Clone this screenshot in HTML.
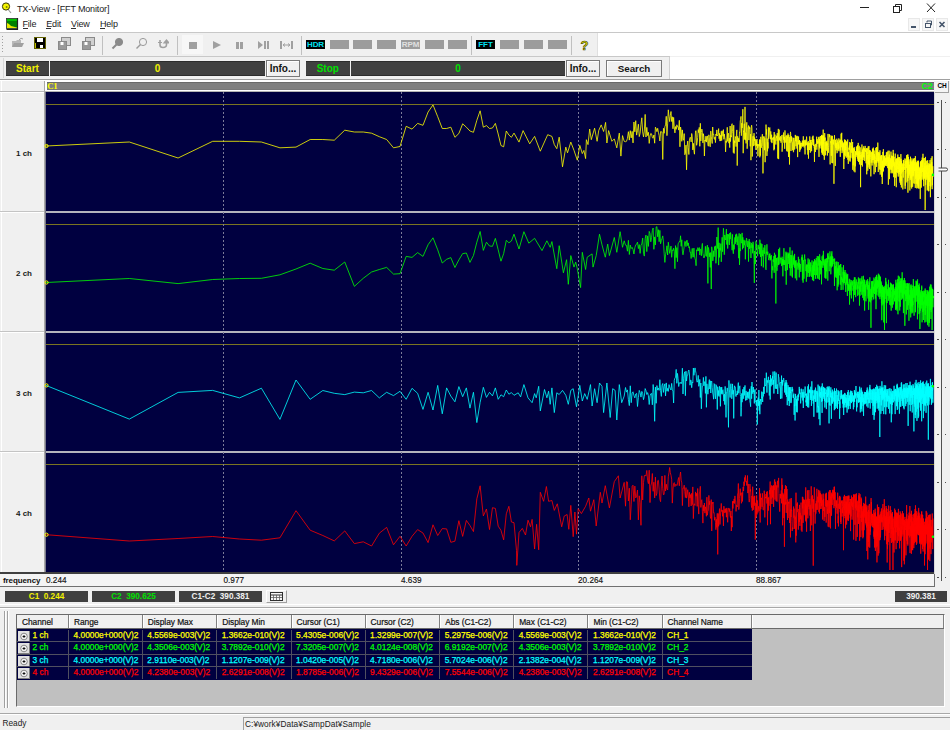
<!DOCTYPE html><html><head><meta charset="utf-8"><style>
html,body{margin:0;padding:0;}
body{width:950px;height:730px;position:relative;overflow:hidden;background:#f0f0f0;font-family:"Liberation Sans", sans-serif;}
div,span,svg{position:absolute;}
span{white-space:pre;}
</style></head><body>
<div style="left:0px;top:0px;width:950px;height:33px;background:#ffffff"></div>
<svg style="left:0;top:0" width="20" height="18" viewBox="0 0 20 18"><line x1="7" y1="8" x2="11" y2="13" stroke="#9a9a9a" stroke-width="1.2"/><circle cx="6" cy="6.5" r="3.6" fill="#f5f500" stroke="#3a3a00" stroke-width="1"/><circle cx="6.6" cy="7" r="1" fill="#808000"/></svg>
<span style="left:17px;top:5.06px;font-size:9px;line-height:9px;font-weight:400;color:#1a1a1a;letter-spacing:-0.15px;">TX-View - [FFT Monitor]</span>
<div style="left:860px;top:7px;width:9px;height:1px;background:#222"></div>
<svg style="left:890px;top:2px" width="14" height="12" viewBox="0 0 14 12"><rect x="3.5" y="4.5" width="6" height="6" fill="none" stroke="#222" stroke-width="1"/><path d="M5.5 4.5 V2.5 H11.5 V8.5 H9.5" fill="none" stroke="#222" stroke-width="1"/></svg>
<svg style="left:925px;top:2px" width="12" height="12" viewBox="0 0 12 12"><path d="M2 1.5 L10 10 M10 1.5 L2 10" stroke="#222" stroke-width="1"/></svg>
<svg style="left:5px;top:17px" width="14" height="14" viewBox="0 0 14 14"><rect x="1.5" y="1.5" width="11" height="10" fill="#00c000" stroke="#303030" stroke-width="0.8"/><rect x="2" y="4" width="10" height="7" fill="#008000"/><path d="M2 6 L4 7 L6 9 L10 10 L12 10.5 V11 H2 Z" fill="#e8e800"/><path d="M12.5 1 V12.5 H1.5" fill="none" stroke="#202020" stroke-width="1.2"/></svg>
<span style="left:22.5px;top:20.26px;font-size:9px;line-height:9px;font-weight:400;color:#1a1a1a;letter-spacing:-0.2px;">File</span>
<div style="left:22.5px;top:28px;width:5px;height:1px;background:#333"></div>
<span style="left:46.3px;top:20.26px;font-size:9px;line-height:9px;font-weight:400;color:#1a1a1a;letter-spacing:-0.2px;">Edit</span>
<div style="left:46.3px;top:28px;width:5px;height:1px;background:#333"></div>
<span style="left:71px;top:20.26px;font-size:9px;line-height:9px;font-weight:400;color:#1a1a1a;letter-spacing:-0.2px;">View</span>
<div style="left:71px;top:28px;width:5px;height:1px;background:#333"></div>
<span style="left:100px;top:20.26px;font-size:9px;line-height:9px;font-weight:400;color:#1a1a1a;letter-spacing:-0.2px;">Help</span>
<div style="left:100px;top:28px;width:5px;height:1px;background:#333"></div>
<div style="left:908px;top:18px;width:12px;height:13px;background:#f7f7f7;border:1px solid #e8e8e8;box-sizing:border-box"></div>
<div style="left:922px;top:18px;width:12px;height:13px;background:#f7f7f7;border:1px solid #e8e8e8;box-sizing:border-box"></div>
<div style="left:936px;top:18px;width:12px;height:13px;background:#f7f7f7;border:1px solid #e8e8e8;box-sizing:border-box"></div>
<div style="left:911px;top:26px;width:5px;height:1.5px;background:#44546a"></div>
<svg style="left:922px;top:18px" width="13" height="13" viewBox="0 0 13 13"><rect x="3.5" y="5.5" width="5" height="4" fill="none" stroke="#44546a" stroke-width="1"/><path d="M5 4.5 V3 H9.5 V7 H8.5" fill="none" stroke="#44546a" stroke-width="1"/></svg>
<svg style="left:936px;top:18px" width="13" height="13" viewBox="0 0 13 13"><path d="M3.5 4 L8.5 9 M8.5 4 L3.5 9" stroke="#44546a" stroke-width="1.6"/></svg>
<div style="left:0px;top:32px;width:950px;height:1px;background:#c8c8c8"></div>
<div style="left:0px;top:33px;width:950px;height:23px;background:#ffffff"></div>
<div style="left:0px;top:33px;width:598px;height:23px;background:#f0f0f0"></div>
<div style="left:597px;top:33px;width:1px;height:23px;background:#e0e0e0"></div>
<div style="left:2px;top:36px;width:1px;height:1px;background:#a0a0a0"></div>
<div style="left:2px;top:39px;width:1px;height:1px;background:#a0a0a0"></div>
<div style="left:2px;top:42px;width:1px;height:1px;background:#a0a0a0"></div>
<div style="left:2px;top:45px;width:1px;height:1px;background:#a0a0a0"></div>
<div style="left:2px;top:48px;width:1px;height:1px;background:#a0a0a0"></div>
<div style="left:2px;top:51px;width:1px;height:1px;background:#a0a0a0"></div>
<div style="left:0px;top:56px;width:670px;height:1px;background:#c8c8c8"></div>
<svg style="left:11px;top:37px" width="14" height="12" viewBox="0 0 14 12"><path d="M1 4 H5 L6 3 H10 V10 H1 Z" fill="#b8b8b8"/><path d="M1 10 L3 6 H13 L11 10 Z" fill="#a0a0a0"/><path d="M8 3 Q10 0 12 2" fill="none" stroke="#a0a0a0" stroke-width="1"/></svg>
<svg style="left:34px;top:37px" width="13" height="13" viewBox="0 0 13 13"><rect x="0.5" y="0.5" width="11" height="11" fill="#000" stroke="#606000" stroke-width="1"/><rect x="3" y="1" width="6" height="4" fill="#ffffff"/><rect x="6" y="8" width="3" height="3" fill="#ffffff"/><rect x="1" y="6" width="1" height="5" fill="#c0c000"/></svg>
<svg style="left:58px;top:37px" width="13" height="13" viewBox="0 0 13 13"><rect x="3.5" y="0.5" width="9" height="8" fill="#d0d0d0" stroke="#8a8a8a"/><rect x="0.5" y="4.5" width="8" height="8" fill="#9a9a9a" stroke="#8a8a8a"/><rect x="2.5" y="5" width="3" height="3" fill="#fff"/></svg>
<svg style="left:82px;top:37px" width="13" height="13" viewBox="0 0 13 13"><rect x="3.5" y="0.5" width="9" height="8" fill="#d0d0d0" stroke="#8a8a8a"/><rect x="0.5" y="4.5" width="8" height="8" fill="#9a9a9a" stroke="#8a8a8a"/><rect x="2.5" y="5" width="3" height="3" fill="#fff"/></svg>
<div style="left:102px;top:36px;width:1px;height:19px;background:#c0c0c0"></div>
<svg style="left:111px;top:37px" width="13" height="13" viewBox="0 0 13 13"><circle cx="8" cy="5" r="3.6" fill="#8a8a8a" stroke="#8a8a8a"/><line x1="5.5" y1="7.5" x2="1.5" y2="11.5" stroke="#8a8a8a" stroke-width="2"/></svg>
<svg style="left:135px;top:37px" width="13" height="13" viewBox="0 0 13 13"><circle cx="8" cy="5" r="3.6" fill="none" stroke="#9a9a9a"/><line x1="5.5" y1="7.5" x2="1.5" y2="11.5" stroke="#9a9a9a" stroke-width="1.5"/></svg>
<svg style="left:157px;top:38px" width="12" height="12" viewBox="0 0 12 12"><path d="M3 2 V7 Q3 9.5 6 9.5 Q9.5 9.5 9.5 6.5 V5" fill="none" stroke="#a0a0a0" stroke-width="1.6"/><path d="M1 4.5 H5 M7 5 L9.5 2 L12 5 Z" stroke="#a0a0a0" fill="#a0a0a0" stroke-width="1.2"/></svg>
<div style="left:177px;top:36px;width:1px;height:19px;background:#c0c0c0"></div>
<div style="left:182px;top:35px;width:21px;height:19px;background:#f7f7f7"></div>
<div style="left:189px;top:42px;width:8px;height:7px;background:#a0a0a0"></div>
<svg style="left:212px;top:40px" width="10" height="10" viewBox="0 0 10 10"><path d="M1 1 L9 5 L1 9 Z" fill="#a0a0a0"/></svg>
<div style="left:236px;top:42px;width:3px;height:7px;background:#a0a0a0"></div>
<div style="left:240px;top:42px;width:3px;height:7px;background:#a0a0a0"></div>
<svg style="left:257px;top:40px" width="13" height="10" viewBox="0 0 13 10"><path d="M1 1 L6 5 L1 9 Z" fill="#a0a0a0"/><rect x="7" y="1" width="2" height="8" fill="#a0a0a0"/><rect x="10" y="1" width="2" height="8" fill="#a0a0a0"/></svg>
<svg style="left:279px;top:40px" width="15" height="10" viewBox="0 0 15 10"><rect x="1" y="1" width="2" height="8" fill="#a0a0a0"/><rect x="12" y="1" width="2" height="8" fill="#a0a0a0"/><path d="M4 5 H11 M4 5 L6 3.5 M4 5 L6 6.5 M11 5 L9 3.5 M11 5 L9 6.5" stroke="#a0a0a0" stroke-width="1"/></svg>
<div style="left:301px;top:36px;width:1px;height:19px;background:#c0c0c0"></div>
<div style="left:306px;top:40px;width:19px;height:9px;background:#000"></div>
<span style="left:15.5px;width:600px;text-align:center;top:40.92px;font-size:8px;line-height:8px;font-weight:700;color:#00e0f0;letter-spacing:-0.1px;">HDR</span>
<div style="left:329.5px;top:40px;width:19px;height:9px;background:#9c9c9c"></div>
<div style="left:353px;top:40px;width:19px;height:9px;background:#9c9c9c"></div>
<div style="left:377px;top:40px;width:19px;height:9px;background:#9c9c9c"></div>
<div style="left:401px;top:40px;width:19px;height:9px;background:#9c9c9c"></div>
<span style="left:110.5px;width:600px;text-align:center;top:40.92px;font-size:8px;line-height:8px;font-weight:700;color:#e0e0e0;letter-spacing:-0.1px;">RPM</span>
<div style="left:424.5px;top:40px;width:19px;height:9px;background:#9c9c9c"></div>
<div style="left:448px;top:40px;width:19px;height:9px;background:#9c9c9c"></div>
<div style="left:471px;top:36px;width:1px;height:19px;background:#c0c0c0"></div>
<div style="left:476px;top:40px;width:19px;height:9px;background:#000"></div>
<span style="left:185.5px;width:600px;text-align:center;top:40.92px;font-size:8px;line-height:8px;font-weight:700;color:#00e0f0;letter-spacing:-0.1px;">FFT</span>
<div style="left:500px;top:40px;width:19px;height:9px;background:#9c9c9c"></div>
<div style="left:524px;top:40px;width:19px;height:9px;background:#9c9c9c"></div>
<div style="left:548px;top:40px;width:19px;height:9px;background:#9c9c9c"></div>
<div style="left:571px;top:36px;width:1px;height:19px;background:#c0c0c0"></div>
<span style="left:284.5px;width:600px;text-align:center;top:38.82px;font-size:13px;line-height:13px;font-weight:700;color:#e8e800;-webkit-text-stroke:0.6px #303000;">?</span>
<div style="left:0px;top:57px;width:950px;height:23px;background:#ffffff"></div>
<div style="left:0px;top:57px;width:670px;height:22px;background:#f0f0f0"></div>
<div style="left:669px;top:57px;width:1px;height:22px;background:#d0d0d0"></div>
<div style="left:3px;top:58px;width:1px;height:20px;background:#d8d8d8"></div>
<div style="left:6px;top:61px;width:43px;height:15px;background:#404040;border-top:1px solid #2c2c2c;border-bottom:1px solid #2c2c2c;box-sizing:border-box"></div>
<span style="left:-272.5px;width:600px;text-align:center;top:63.70px;font-size:10px;line-height:10px;font-weight:700;color:#f0f000;">Start</span>
<div style="left:50px;top:61px;width:215px;height:15px;background:#404040;border-top:1px solid #2c2c2c;border-bottom:1px solid #2c2c2c;box-sizing:border-box"></div>
<span style="left:-142.5px;width:600px;text-align:center;top:63.70px;font-size:10px;line-height:10px;font-weight:700;color:#f0f000;">0</span>
<div style="left:306px;top:61px;width:43.5px;height:15px;background:#404040;border-top:1px solid #2c2c2c;border-bottom:1px solid #2c2c2c;box-sizing:border-box"></div>
<span style="left:27.75px;width:600px;text-align:center;top:63.70px;font-size:10px;line-height:10px;font-weight:700;color:#00e000;">Stop</span>
<div style="left:351px;top:61px;width:214px;height:15px;background:#404040;border-top:1px solid #2c2c2c;border-bottom:1px solid #2c2c2c;box-sizing:border-box"></div>
<span style="left:158.0px;width:600px;text-align:center;top:63.70px;font-size:10px;line-height:10px;font-weight:700;color:#00e000;">0</span>
<div style="left:266px;top:60px;width:34px;height:17px;background:#f0f0f0;border:1px solid #7a7a7a;box-shadow:inset 1px 1px 0 #ffffff;box-sizing:border-box"></div>
<span style="left:-17.0px;width:600px;text-align:center;top:63.70px;font-size:10px;line-height:10px;font-weight:700;color:#141414;">Info...</span>
<div style="left:566px;top:60px;width:34px;height:17px;background:#f0f0f0;border:1px solid #7a7a7a;box-shadow:inset 1px 1px 0 #ffffff;box-sizing:border-box"></div>
<span style="left:283.0px;width:600px;text-align:center;top:63.70px;font-size:10px;line-height:10px;font-weight:700;color:#141414;">Info...</span>
<div style="left:606px;top:60px;width:56px;height:17px;background:#f0f0f0;border:1px solid #7a7a7a;box-shadow:inset 1px 1px 0 #ffffff;box-sizing:border-box"></div>
<span style="left:334.0px;width:600px;text-align:center;top:63.87px;font-size:9.8px;line-height:9.8px;font-weight:700;color:#141414;">Search</span>
<div style="left:0px;top:79px;width:950px;height:1px;background:#a0a0a0"></div>
<div style="left:0px;top:80px;width:950px;height:1px;background:#ffffff"></div>
<div style="left:0px;top:81px;width:45px;height:500px;background:#f0f0f0"></div>
<div style="left:1px;top:81px;width:1px;height:505px;background:#ffffff"></div>
<div style="left:45px;top:80px;width:889px;height:12px;background:#ffffff"></div>
<div style="left:47px;top:82px;width:887px;height:8px;background:#808080;border-top:1px solid #6a6a6a;border-bottom:1px solid #787878;box-sizing:border-box"></div>
<div style="left:45px;top:91px;width:889px;height:1px;background:#b4b4b4"></div>
<span style="left:47.2px;top:81.63px;font-size:8.8px;line-height:8.8px;font-weight:700;color:#ffff00;letter-spacing:-0.2px;font-family:'Liberation Serif',serif;">C1</span>
<span style="left:332.5px;width:600px;text-align:right;top:81.56px;font-size:9px;line-height:9px;font-weight:700;color:#00ff00;letter-spacing:-0.2px;">C2</span>
<div style="left:935px;top:81px;width:14px;height:12px;background:#f4f4f4;border-right:1px solid #a0a0a0;border-bottom:1px solid #a0a0a0;box-sizing:border-box"></div>
<span style="left:642px;width:600px;text-align:center;top:83.41px;font-size:6.5px;line-height:6.5px;font-weight:700;color:#000;letter-spacing:-0.3px;">CH</span>
<div style="left:44px;top:81px;width:1px;height:505px;background:#a8a8a8"></div>
<div style="left:0px;top:91px;width:44px;height:1px;background:#b8b8b8"></div>
<div style="left:0px;top:92px;width:44px;height:1px;background:#ffffff"></div>
<div style="left:45px;top:92px;width:889px;height:480px;background:#000040"></div>
<div style="left:45px;top:92px;width:1px;height:480px;background:#7a7a8a"></div>
<div style="left:46px;top:211px;width:888px;height:2px;background:#b4b4bc"></div>
<div style="left:0px;top:211px;width:44px;height:1px;background:#c4c4c4"></div>
<div style="left:0px;top:212px;width:44px;height:1px;background:#ffffff"></div>
<div style="left:46px;top:331px;width:888px;height:2px;background:#b4b4bc"></div>
<div style="left:0px;top:331px;width:44px;height:1px;background:#c4c4c4"></div>
<div style="left:0px;top:332px;width:44px;height:1px;background:#ffffff"></div>
<div style="left:46px;top:451px;width:888px;height:2px;background:#b4b4bc"></div>
<div style="left:0px;top:451px;width:44px;height:1px;background:#c4c4c4"></div>
<div style="left:0px;top:452px;width:44px;height:1px;background:#ffffff"></div>
<span style="left:-276px;width:600px;text-align:center;top:149.62px;font-size:8px;line-height:8px;font-weight:700;color:#1a1a1a;">1 ch</span>
<span style="left:-276px;width:600px;text-align:center;top:269.62px;font-size:8px;line-height:8px;font-weight:700;color:#1a1a1a;">2 ch</span>
<span style="left:-276px;width:600px;text-align:center;top:389.62px;font-size:8px;line-height:8px;font-weight:700;color:#1a1a1a;">3 ch</span>
<span style="left:-276px;width:600px;text-align:center;top:509.62px;font-size:8px;line-height:8px;font-weight:700;color:#1a1a1a;">4 ch</span>
<svg style="left:0;top:0" width="950" height="730" viewBox="0 0 950 730"><line x1="46" y1="104.5" x2="934" y2="104.5" stroke="#7a7420" stroke-width="1"/><line x1="46" y1="224.5" x2="934" y2="224.5" stroke="#7a7420" stroke-width="1"/><line x1="46" y1="344.5" x2="934" y2="344.5" stroke="#7a7420" stroke-width="1"/><line x1="46" y1="464.5" x2="934" y2="464.5" stroke="#7a7420" stroke-width="1"/><line x1="223.5" y1="92" x2="223.5" y2="572" stroke="#7a7a98" stroke-width="1" stroke-dasharray="2,2"/><line x1="401.5" y1="92" x2="401.5" y2="572" stroke="#7a7a98" stroke-width="1" stroke-dasharray="2,2"/><line x1="578.5" y1="92" x2="578.5" y2="572" stroke="#7a7a98" stroke-width="1" stroke-dasharray="2,2"/><line x1="756.5" y1="92" x2="756.5" y2="572" stroke="#7a7a98" stroke-width="1" stroke-dasharray="2,2"/><polyline points="46.00,146.0 129.33,142.0 178.08,158.0 212.67,141.3 239.50,141.3 261.42,142.0 279.95,147.8 296.00,147.1 310.16,139.5 322.83,139.5 334.29,140.2 344.75,130.2 354.37,132.0 363.28,132.0 371.58,133.2 379.34,136.7 386.63,139.5 393.50,147.8 400.00,146.5 406.17,126.3 412.03,129.1 417.62,123.4 422.97,125.3 428.09,112.0 432.99,104.9 437.71,116.7 442.25,128.5 446.62,128.5 450.84,127.2 454.91,137.3 458.86,133.5 462.67,123.8 466.37,127.2 469.96,131.0 473.45,132.3 476.83,120.3 480.13,110.8 483.33,127.2 486.46,125.6 489.50,128.5 492.47,128.0 495.37,123.4 498.19,134.0 500.96,145.5 503.66,146.8 506.30,131.0 508.89,135.0 511.42,137.3 514.00,133.1 519.00,142.1 523.10,130.6 529.70,143.8 534.60,136.4 540.30,151.2 547.70,134.7 551.90,136.4 554.30,144.6 556.80,148.7 559.20,137.2 562.50,166.8 565.80,147.1 567.50,152.8 570.80,142.1 574.00,150.4 577.30,160.2 579.80,145.4 582.30,153.6 583.90,150.4 585.60,158.6 586.40,139.7 588.00,144.6 589.70,129.0 591.30,139.7 594.60,128.2 597.10,141.3 598.70,130.6 601.20,124.9 603.60,131.5 605.60,122.4 606.90,143.0 608.60,130.6 611.90,141.3 614.30,138.9 616.80,147.9 619.30,133.1 620.90,156.1 622.50,135.6 624.20,141.3 625.52,141.7 626.49,141.3 627.45,138.4 628.40,131.7 629.34,140.1 630.28,130.7 631.21,137.9 632.13,131.4 633.04,142.9 633.95,122.0 634.85,131.8 635.74,120.7 636.63,135.1 637.51,130.5 638.39,124.2 639.25,136.6 640.11,133.3 640.97,124.4 641.82,117.8 642.66,131.9 643.50,136.9 644.33,131.0 645.16,114.4 645.98,137.0 646.80,127.4 647.61,135.6 648.41,132.3 649.21,143.4 650.00,136.0 650.79,133.4 651.57,133.9 652.35,137.7 653.13,138.2 653.89,135.0 654.66,143.2 655.42,127.2 656.17,128.7 656.92,131.7 657.66,128.3 658.40,132.2 659.14,135.6 659.87,141.0 660.59,131.6 661.32,131.9 662.03,131.8 662.75,159.5 663.46,128.3 664.16,133.3 664.86,126.7 665.56,124.9 666.25,116.3 666.94,135.7 667.63,123.9 668.31,109.8 668.99,116.6 669.66,121.6 670.33,115.4 671.00,111.5 671.66,121.5 672.32,116.8 672.97,128.8 673.62,117.4 674.27,126.8 674.92,132.9 675.56,126.5 676.20,129.4 676.83,124.8 677.46,126.8 678.09,126.6 678.71,130.1 679.33,120.3 679.95,146.8 680.57,127.0 681.18,131.0 681.79,141.3 682.39,129.9 683.00,139.8 683.60,140.1 684.19,133.6 684.79,154.7 685.38,153.2 685.97,145.1 686.55,169.8 687.13,146.4 687.71,141.0 688.29,147.6 688.86,154.5 689.43,140.0 690.00,137.3 690.57,137.6 691.13,141.9 691.69,133.5 692.25,136.5 692.80,149.9 693.36,143.3 693.91,150.6 694.46,154.2 695.00,140.8 695.54,131.0 696.08,130.6 696.62,145.3 697.16,142.6 697.69,137.4 698.22,129.6 698.75,132.7 699.28,127.4 699.80,146.3 700.32,123.3 700.84,141.0 701.36,132.6 701.87,129.1 702.39,132.2 702.90,142.9 703.40,133.7 703.91,137.1 704.41,156.0 704.92,140.0 705.42,141.3 705.91,136.2 706.41,142.1 706.90,137.0 707.40,135.9 707.89,144.7 708.37,146.2 708.86,134.8 709.34,137.5 709.82,146.1 710.30,146.8 710.78,131.1 711.26,136.3 711.73,139.9 712.21,143.5 712.68,127.0 713.14,134.5 713.61,133.9 714.08,138.9 714.54,139.3 715.00,137.0 715.46,142.6 715.92,134.0 716.38,135.6 716.83,129.9 717.28,135.9 717.73,135.0 718.18,134.7 718.63,128.6 719.08,138.7 719.52,133.4 719.96,141.1 720.41,135.2 720.85,141.0 721.28,131.3 721.72,140.4 722.15,130.7 722.59,133.3 723.02,136.3 723.45,129.6 723.88,139.3 724.31,134.0 724.73,137.3 725.15,139.3 725.58,151.9 726.00,141.0 726.42,142.5 726.84,138.1 727.25,127.3 727.67,141.4 728.08,134.0 728.49,133.2 728.91,143.2 729.32,138.2 729.72,147.6 730.13,126.0 730.54,141.6 730.94,135.4 731.34,137.1 731.74,124.4 732.14,123.7 732.54,131.5 732.94,133.9 733.34,152.6 733.73,125.2 734.12,153.5 734.52,140.7 734.91,142.8 735.30,136.5 735.69,138.3 736.07,146.6 736.46,133.9 736.84,129.9 737.23,165.6 737.61,136.3 737.99,139.3 738.37,141.6 738.75,138.2 739.13,141.9 739.50,131.9 739.88,132.3 740.25,120.9 740.63,119.6 741.00,116.4 741.37,135.7 741.74,123.2 742.10,128.0 742.47,125.1 742.84,109.2 743.20,153.2 743.57,130.7 743.93,131.9 744.29,123.7 744.65,139.5 745.01,106.9 745.37,140.2 745.73,132.6 746.08,143.4 746.44,132.3 746.79,122.3 747.15,148.7 747.50,142.5 747.85,127.6 748.20,127.5 748.55,125.5 748.90,140.1 749.24,126.6 749.59,128.7 749.93,127.7 750.28,146.3 750.62,134.0 750.96,160.2 751.30,127.1 751.64,125.2 751.98,128.3 752.32,156.5 752.66,138.4 752.99,136.2 753.33,136.0 753.66,146.1 754.00,133.2 754.33,140.8 754.66,137.5 754.99,145.4 755.32,139.2 755.65,147.5 755.98,150.0 756.31,141.3 756.63,145.7 756.96,139.0 757.28,148.3 757.61,144.0 757.93,156.2 758.25,148.8 758.57,144.6 758.89,144.1 759.21,146.2 759.53,139.5 759.85,157.3 760.16,139.8 760.48,155.6 760.80,136.8 761.11,146.5 761.42,147.7 761.74,142.6 762.05,137.7 762.36,134.2 762.67,146.5 762.98,173.4 763.29,153.9 763.60,136.5 763.90,137.7 764.21,136.6 764.51,150.2 764.82,138.2 765.12,162.2 765.43,151.0 765.73,141.9 766.03,124.6 766.33,134.5 766.63,129.4 766.93,155.9 767.23,138.6 767.53,151.3 767.82,142.3 768.12,148.4 768.42,127.3 768.71,138.9 769.01,136.0 769.30,132.9 769.59,127.8 769.88,127.5 770.18,136.0 770.47,139.2 770.76,131.4 771.05,140.2 771.34,142.0 771.62,134.7 771.91,143.1 772.20,140.5 772.48,139.3 772.77,137.7 773.05,139.7 773.34,137.9 773.62,136.8 773.90,150.3 774.18,132.1 774.47,149.1 774.75,136.0 775.03,134.6 775.31,137.4 775.58,141.0 775.86,144.5 776.14,137.6 776.42,138.0 776.69,135.7 776.97,140.8 777.24,133.1 777.52,137.1 777.79,158.5 778.06,138.0 778.34,128.9 778.61,159.1 778.88,135.5 779.15,129.7 779.42,139.9 779.69,137.5 779.96,139.3 780.22,141.0 780.49,136.3 780.76,138.1 781.02,142.7 781.29,138.6 781.56,138.7 781.82,135.1 782.08,151.7 782.35,148.2 782.61,142.9 782.87,142.6 783.13,134.7 783.40,139.7 783.66,132.5 783.92,139.8 784.18,142.7 784.43,136.8 784.69,148.8 784.95,130.4 785.21,135.0 785.46,142.3 785.72,142.6 785.98,136.2 786.23,136.0 786.48,137.7 786.74,150.8 786.99,135.0 787.24,151.6 787.50,136.7 787.75,137.8 788.00,133.5 788.25,138.2 788.50,157.0 788.75,135.0 789.00,138.1 789.25,139.3 789.50,164.5 789.74,137.2 789.99,142.8 790.24,138.4 790.48,131.9 790.73,133.6 790.97,151.0 791.22,136.1 791.46,141.2 791.71,137.0 791.95,142.2 792.19,142.0 792.44,142.8 792.68,150.3 792.92,144.3 793.16,137.8 793.40,152.2 793.64,151.3 793.88,137.9 794.12,139.7 794.36,140.9 794.59,149.5 794.83,148.9 795.07,143.9 795.30,134.9 795.54,141.3 795.78,135.6 796.01,146.2 796.24,142.7 796.48,141.2 796.71,136.5 796.95,148.6 797.18,135.9 797.41,142.4 797.64,157.1 797.87,143.7 798.11,144.3 798.34,140.5 798.57,136.5 798.80,144.2 799.02,140.7 799.25,144.5 799.48,140.1 799.71,151.9 799.94,141.1 800.16,150.2 800.39,142.8 800.62,148.7 800.84,144.9 801.07,148.4 801.29,145.9 801.52,142.8 801.74,144.0 801.97,146.2 802.19,143.8 802.41,140.6 802.63,146.6 802.86,143.2 803.08,145.0 803.30,136.3 803.52,145.9 803.74,140.8 803.96,147.4 804.18,147.3 804.40,140.3 804.62,141.7 804.84,146.5 805.05,154.4 805.27,139.7 805.49,145.6 805.71,141.3 805.92,145.0 806.14,143.2 806.35,144.6 806.57,136.6 806.78,139.4 807.00,145.3 807.21,144.6 807.43,150.1 807.64,142.3 807.85,154.6 808.07,149.3 808.28,141.1 808.49,158.6 808.70,143.3 808.91,144.5 809.12,143.1 809.33,146.0 809.54,150.0 809.75,136.4 809.96,141.0 810.17,140.3 810.38,152.6 810.59,140.1 810.80,148.1 811.00,148.2 811.21,142.8 811.42,142.2 811.62,151.2 811.83,140.0 812.03,141.6 812.24,137.6 812.45,136.7 812.65,140.8 812.85,144.9 813.06,135.7 813.26,140.2 813.46,145.9 813.67,139.2 813.87,141.1 814.07,148.0 814.27,147.9 814.48,161.9 814.68,144.7 814.88,149.4 815.08,147.4 815.28,148.0 815.48,152.0 815.68,143.9 815.88,146.9 816.08,146.0 816.27,146.0 816.47,142.3 816.67,136.7 816.87,149.7 817.07,139.0 817.26,140.0 817.46,142.7 817.66,143.7 817.85,140.9 818.05,143.5 818.24,142.2 818.44,137.3 818.63,139.7 818.83,147.9 819.02,156.9 819.21,136.7 819.41,146.8 819.60,139.1 819.79,148.4 819.99,143.5 820.18,145.5 820.37,140.0 820.56,136.1 820.75,143.7 820.94,141.5 821.14,145.6 821.33,148.5 821.52,135.3 821.71,152.6 821.89,134.9 822.08,140.0 822.27,154.8 822.46,135.7 822.65,153.5 822.84,141.4 823.03,151.2 823.21,129.6 823.40,144.2 823.59,135.4 823.77,155.8 823.96,138.1 824.15,154.1 824.33,159.8 824.52,141.6 824.70,133.1 824.89,140.6 825.07,137.5 825.26,138.1 825.44,142.2 825.62,155.3 825.81,141.7 825.99,149.7 826.17,141.8 826.36,145.4 826.54,143.7 826.72,150.8 826.90,140.8 827.08,145.3 827.26,143.1 827.44,155.5 827.63,143.5 827.81,141.8 827.99,133.9 828.17,142.4 828.35,152.8 828.52,147.3 828.70,145.8 828.88,140.8 829.06,135.1 829.24,134.1 829.42,135.0 829.59,136.0 829.77,137.2 829.95,135.1 830.13,164.4 830.30,145.1 830.48,142.8 830.66,141.2 830.83,142.9 831.01,142.3 831.18,136.6 831.36,155.8 831.53,144.0 831.71,135.7 831.88,162.9 832.06,155.4 832.23,138.0 832.40,135.9 832.58,163.2 832.75,162.0 832.92,139.9 833.10,142.4 833.27,144.5 833.44,144.2 833.61,141.2 833.78,139.4 833.95,183.8 834.13,158.2 834.30,140.0 834.47,135.2 834.64,139.1 834.81,145.1 834.98,146.4 835.15,146.6 835.32,165.9 835.49,139.8 835.66,147.6 835.82,142.7 835.99,144.2 836.16,148.2 836.33,143.2 836.50,146.2 836.66,150.3 836.83,138.7 837.00,153.2 837.17,153.0 837.33,149.5 837.50,144.6 837.66,140.3 837.83,148.7 838.00,150.6 838.16,142.2 838.33,149.3 838.49,144.2 838.66,148.6 838.82,138.4 838.99,151.2 839.15,150.3 839.31,147.9 839.48,148.1 839.64,140.8 839.80,142.4 839.97,139.5 840.13,144.5 840.29,156.8 840.45,140.0 840.62,149.2 840.78,150.4 840.94,145.7 841.10,133.7 841.26,146.8 841.42,147.2 841.59,136.1 841.75,132.8 841.91,145.9 842.07,153.1 842.23,140.9 842.39,140.7 842.55,149.6 842.71,142.6 842.86,149.1 843.02,151.5 843.18,146.4 843.34,144.0 843.50,147.4 843.66,142.6 843.81,169.0 843.97,146.3 844.13,147.8 844.29,159.0 844.44,139.5 844.60,154.9 844.76,153.2 844.91,141.2 845.07,139.8 845.23,140.3 845.38,150.1 845.54,140.2 845.69,156.3 845.85,145.2 846.00,141.3 846.16,155.0 846.31,157.7 846.47,146.5 846.62,142.2 846.78,144.8 846.93,141.5 847.08,150.4 847.24,151.3 847.39,156.8 847.54,151.5 847.70,139.5 847.85,159.7 848.00,155.8 848.15,152.2 848.31,163.9 848.46,152.4 848.61,154.9 848.76,157.4 848.91,147.7 849.06,149.6 849.21,148.7 849.36,145.4 849.52,149.6 849.67,142.1 849.82,160.6 849.97,155.6 850.12,161.6 850.27,152.5 850.41,145.5 850.56,142.7 850.71,149.6 850.86,157.7 851.01,153.7 851.16,149.0 851.31,152.7 851.46,143.3 851.60,139.3 851.75,150.1 851.90,148.8 852.05,145.8 852.19,152.8 852.34,158.5 852.49,144.7 852.63,142.0 852.78,169.8 852.93,147.8 853.07,153.3 853.22,165.3 853.37,158.1 853.51,158.0 853.66,148.3 853.80,157.4 853.95,171.3 854.09,157.1 854.24,147.2 854.38,151.2 854.53,149.3 854.67,152.1 854.81,158.6 854.96,172.3 855.10,154.5 855.24,166.3 855.39,156.5 855.53,151.2 855.67,155.0 855.82,153.7 855.96,151.7 856.10,156.9 856.24,155.0 856.39,146.7 856.53,151.1 856.67,154.5 856.81,153.0 856.95,154.6 857.10,155.2 857.24,146.0 857.38,158.6 857.52,145.2 857.66,147.9 857.80,147.4 857.94,160.9 858.08,153.0 858.22,142.9 858.36,156.5 858.50,161.9 858.64,151.4 858.78,159.9 858.92,153.0 859.06,161.5 859.20,145.8 859.34,157.2 859.47,164.4 859.61,151.1 859.75,157.1 859.89,152.8 860.03,154.5 860.16,147.3 860.30,154.6 860.44,156.7 860.58,187.2 860.71,154.9 860.85,158.9 860.99,153.3 861.12,151.9 861.26,154.8 861.40,165.0 861.53,154.4 861.67,154.9 861.81,152.0 861.94,144.5 862.08,158.1 862.21,155.6 862.35,166.5 862.48,149.7 862.62,160.1 862.75,149.8 862.89,150.5 863.02,160.1 863.16,148.3 863.29,155.1 863.42,156.9 863.56,154.4 863.69,146.3 863.83,154.6 863.96,154.9 864.09,157.6 864.23,148.0 864.36,154.1 864.49,157.1 864.62,161.0 864.76,159.8 864.89,149.3 865.02,151.0 865.15,145.9 865.29,147.8 865.42,151.5 865.55,150.4 865.68,151.9 865.81,149.8 865.94,150.8 866.08,163.3 866.21,151.2 866.34,158.8 866.47,160.3 866.60,148.1 866.73,174.3 866.86,155.3 866.99,159.2 867.12,152.1 867.25,154.4 867.38,148.4 867.51,148.4 867.64,154.4 867.77,170.7 867.90,155.0 868.03,167.5 868.16,146.5 868.28,149.1 868.41,159.5 868.54,164.3 868.67,153.6 868.80,152.1 868.93,146.1 869.05,154.7 869.18,165.3 869.31,151.7 869.44,169.0 869.56,150.0 869.69,151.4 869.82,151.7 869.95,151.0 870.07,157.2 870.20,150.4 870.33,156.9 870.45,158.0 870.58,159.4 870.71,159.4 870.83,176.4 870.96,166.0 871.08,151.7 871.21,162.7 871.33,153.5 871.46,152.3 871.59,154.4 871.71,156.7 871.84,161.7 871.96,162.4 872.09,165.5 872.21,155.7 872.33,154.4 872.46,148.6 872.58,160.1 872.71,149.3 872.83,149.7 872.96,162.7 873.08,149.2 873.20,155.5 873.33,147.6 873.45,151.9 873.57,158.9 873.70,159.9 873.82,155.9 873.94,156.7 874.06,174.2 874.19,150.5 874.31,156.9 874.43,158.3 874.55,154.1 874.68,163.0 874.80,164.3 874.92,155.7 875.04,162.6 875.16,160.0 875.28,170.2 875.41,172.2 875.53,159.5 875.65,156.3 875.77,147.9 875.89,155.4 876.01,159.1 876.13,158.7 876.25,163.0 876.37,157.2 876.49,147.1 876.61,166.9 876.73,157.3 876.85,151.4 876.97,151.0 877.09,155.7 877.21,153.6 877.33,147.4 877.45,149.3 877.57,161.2 877.69,155.1 877.81,142.6 877.93,155.6 878.05,162.7 878.16,152.1 878.28,172.0 878.40,166.3 878.52,156.6 878.64,161.3 878.76,153.2 878.87,152.6 878.99,160.6 879.11,152.3 879.23,154.6 879.34,153.9 879.46,159.0 879.58,160.1 879.70,169.5 879.81,158.9 879.93,150.3 880.05,152.7 880.16,174.6 880.28,173.0 880.40,163.9 880.51,156.4 880.63,160.8 880.75,169.9 880.86,162.5 880.98,158.7 881.09,155.2 881.21,160.2 881.32,155.1 881.44,155.5 881.55,157.1 881.67,176.8 881.79,155.4 881.90,168.7 882.02,175.4 882.13,160.9 882.24,184.0 882.36,175.1 882.47,163.2 882.59,161.5 882.70,172.2 882.82,151.9 882.93,154.6 883.04,161.3 883.16,160.2 883.27,164.6 883.39,149.2 883.50,171.3 883.61,164.6 883.73,166.9 883.84,155.1 883.95,161.6 884.06,163.0 884.18,163.8 884.29,156.0 884.40,167.4 884.52,156.3 884.63,157.8 884.74,161.9 884.85,164.9 884.96,163.5 885.08,162.7 885.19,165.8 885.30,159.2 885.41,162.7 885.52,165.2 885.63,157.8 885.75,161.8 885.86,161.8 885.97,155.1 886.08,163.3 886.19,165.9 886.30,155.8 886.41,152.4 886.52,157.7 886.63,163.9 886.74,159.9 886.85,157.7 886.96,166.2 887.07,157.6 887.18,151.9 887.29,157.2 887.40,157.2 887.51,161.8 887.62,158.3 887.73,168.1 887.84,156.9 887.95,160.7 888.06,150.7 888.17,165.5 888.28,158.0 888.39,184.7 888.50,162.2 888.61,156.9 888.71,167.7 888.82,159.8 888.93,168.6 889.04,164.7 889.15,150.7 889.26,170.3 889.36,154.6 889.47,179.1 889.58,163.4 889.69,159.5 889.80,158.0 889.90,166.3 890.01,162.1 890.12,159.8 890.23,158.4 890.33,158.4 890.44,161.4 890.55,169.6 890.65,160.6 890.76,163.2 890.87,163.3 890.97,151.6 891.08,173.3 891.19,159.0 891.29,168.1 891.40,161.3 891.51,155.7 891.61,169.8 891.72,162.4 891.82,163.3 891.93,162.8 892.04,172.5 892.14,161.2 892.25,155.9 892.35,159.8 892.46,167.3 892.56,156.7 892.67,164.9 892.77,173.3 892.88,161.0 892.98,162.8 893.09,161.8 893.19,149.9 893.30,160.8 893.40,153.1 893.51,166.0 893.61,158.5 893.71,177.2 893.82,167.2 893.92,159.4 894.03,158.7 894.13,156.8 894.23,165.8 894.34,167.6 894.44,165.8 894.54,163.2 894.65,185.9 894.75,167.5 894.85,161.8 894.96,174.1 895.06,167.8 895.16,156.2 895.27,153.6 895.37,168.0 895.47,171.1 895.57,174.6 895.68,177.7 895.78,159.1 895.88,159.6 895.98,169.6 896.09,164.4 896.19,161.9 896.29,187.2 896.39,160.7 896.49,158.8 896.60,172.0 896.70,161.4 896.80,161.0 896.90,168.3 897.00,158.0 897.10,172.4 897.20,166.1 897.31,168.9 897.41,165.5 897.51,158.7 897.61,164.0 897.71,164.2 897.81,154.5 897.91,173.0 898.01,173.1 898.11,164.5 898.21,176.6 898.31,157.0 898.41,169.2 898.51,167.4 898.61,167.6 898.71,159.7 898.81,157.6 898.91,162.7 899.01,174.2 899.11,167.6 899.21,161.1 899.31,172.0 899.41,157.8 899.51,157.1 899.61,171.2 899.71,168.0 899.81,171.8 899.91,161.7 900.01,182.7 900.10,161.4 900.20,180.8 900.30,158.8 900.40,164.5 900.50,165.8 900.60,180.0 900.70,184.8 900.79,168.8 900.89,154.1 900.99,164.4 901.09,158.8 901.19,180.9 901.28,176.3 901.38,187.5 901.48,161.0 901.58,173.5 901.67,171.2 901.77,162.9 901.87,163.0 901.97,170.2 902.06,166.8 902.16,170.6 902.26,164.3 902.36,169.2 902.45,169.6 902.55,171.7 902.65,171.0 902.74,171.3 902.84,189.4 902.94,169.9 903.03,163.5 903.13,171.2 903.22,177.6 903.32,160.2 903.42,167.4 903.51,167.1 903.61,171.3 903.71,159.9 903.80,162.7 903.90,165.5 903.99,164.3 904.09,164.1 904.18,168.2 904.28,169.5 904.37,169.9 904.47,167.0 904.56,167.4 904.66,166.3 904.76,165.9 904.85,160.7 904.95,158.4 905.04,172.7 905.13,188.8 905.23,171.1 905.32,185.7 905.42,161.3 905.51,164.4 905.61,170.8 905.70,173.6 905.80,159.3 905.89,160.6 905.98,163.3 906.08,163.2 906.17,161.3 906.27,166.9 906.36,168.1 906.45,164.9 906.55,159.3 906.64,155.1 906.73,159.8 906.83,161.1 906.92,182.4 907.01,173.5 907.11,156.8 907.20,166.2 907.29,166.9 907.39,171.5 907.48,160.6 907.57,166.9 907.67,154.7 907.76,181.0 907.85,154.5 907.94,192.7 908.04,176.4 908.13,169.0 908.22,163.9 908.31,177.9 908.41,164.5 908.50,157.0 908.59,167.9 908.68,161.8 908.77,165.9 908.87,165.5 908.96,175.8 909.05,168.3 909.14,159.4 909.23,163.9 909.32,174.4 909.42,168.6 909.51,166.9 909.60,171.9 909.69,166.9 909.78,164.8 909.87,190.5 909.96,174.0 910.05,164.5 910.14,173.5 910.24,180.1 910.33,161.4 910.42,170.8 910.51,156.7 910.60,164.4 910.69,178.4 910.78,163.6 910.87,171.6 910.96,160.5 911.05,162.0 911.14,161.9 911.23,183.4 911.32,187.1 911.41,161.8 911.50,177.9 911.59,175.2 911.68,188.5 911.77,176.4 911.86,168.4 911.95,158.4 912.04,172.8 912.13,174.2 912.22,162.8 912.31,176.3 912.40,166.3 912.48,166.9 912.57,160.5 912.66,186.8 912.75,166.8 912.84,170.3 912.93,161.8 913.02,173.0 913.11,164.0 913.20,176.4 913.28,168.7 913.37,158.7 913.46,175.2 913.55,173.3 913.64,159.6 913.73,164.6 913.81,183.4 913.90,176.7 913.99,174.9 914.08,173.8 914.17,162.1 914.25,164.8 914.34,158.0 914.43,166.2 914.52,167.4 914.60,170.7 914.69,163.4 914.78,167.1 914.87,183.7 914.95,169.1 915.04,170.8 915.13,167.3 915.22,184.5 915.30,187.9 915.39,156.1 915.48,170.2 915.56,172.5 915.65,178.8 915.74,167.0 915.82,160.5 915.91,176.8 916.00,169.1 916.08,169.5 916.17,164.3 916.26,168.3 916.34,175.8 916.43,177.2 916.52,165.4 916.60,183.7 916.69,162.4 916.77,188.4 916.86,177.3 916.95,170.0 917.03,162.4 917.12,167.0 917.20,163.7 917.29,163.6 917.37,163.6 917.46,184.4 917.55,160.8 917.63,176.4 917.72,176.7 917.80,186.8 917.89,188.1 917.97,161.5 918.06,170.8 918.14,182.7 918.23,186.5 918.31,161.6 918.40,167.5 918.48,160.7 918.57,188.5 918.65,181.6 918.74,173.8 918.82,176.9 918.91,180.3 918.99,176.6 919.07,166.7 919.16,177.1 919.24,177.3 919.33,168.5 919.41,171.6 919.50,178.9 919.58,167.8 919.66,168.9 919.75,171.6 919.83,169.9 919.91,188.7 920.00,168.4 920.08,178.4 920.17,174.4 920.25,198.9 920.33,162.3 920.42,168.7 920.50,173.3 920.58,170.2 920.67,161.4 920.75,180.7 920.83,173.2 920.92,167.0 921.00,172.5 921.08,166.0 921.16,161.2 921.25,187.6 921.33,173.5 921.41,173.0 921.50,165.0 921.58,165.0 921.66,165.5 921.74,160.0 921.83,176.6 921.91,170.7 921.99,161.4 922.07,164.1 922.16,179.6 922.24,157.6 922.32,165.1 922.40,162.3 922.48,171.9 922.57,167.3 922.65,159.5 922.73,160.5 922.81,166.5 922.89,161.0 922.98,153.8 923.06,162.4 923.14,165.6 923.22,158.3 923.30,178.0 923.38,172.1 923.46,168.3 923.55,180.9 923.63,165.5 923.71,186.2 923.79,168.3 923.87,175.2 923.95,175.0 924.03,169.4 924.11,178.8 924.19,171.8 924.28,164.0 924.36,158.0 924.44,175.2 924.52,172.3 924.60,166.6 924.68,178.3 924.76,162.8 924.84,176.9 924.92,169.1 925.00,172.8 925.08,210.0 925.16,210.0 925.24,208.3 925.32,173.3 925.40,174.1 925.48,156.9 925.56,166.8 925.64,184.9 925.72,166.2 925.80,176.9 925.88,170.7 925.96,166.1 926.04,163.5 926.12,161.2 926.20,171.9 926.28,174.0 926.36,172.1 926.44,173.9 926.52,165.3 926.60,170.6 926.67,167.4 926.75,179.8 926.83,165.6 926.91,160.6 926.99,178.3 927.07,169.2 927.15,179.8 927.23,190.5 927.31,173.0 927.39,177.2 927.46,165.5 927.54,168.9 927.62,168.3 927.70,160.3 927.78,186.8 927.86,183.4 927.94,189.7 928.01,172.0 928.09,165.4 928.17,167.5 928.25,169.3 928.33,163.3 928.40,174.2 928.48,184.2 928.56,168.4 928.64,191.3 928.72,176.9 928.79,190.9 928.87,179.2 928.95,186.1 929.03,170.3 929.11,181.6 929.18,169.3 929.26,164.6 929.34,174.6 929.42,182.1 929.49,168.7 929.57,167.9 929.65,164.5 929.72,170.8 929.80,170.1 929.88,163.6 929.96,167.2 930.03,160.0 930.11,174.6 930.19,164.3 930.26,167.9 930.34,171.6 930.42,197.2 930.49,171.1 930.57,176.0 930.65,169.6 930.72,171.0 930.80,170.9 930.88,186.5 930.95,181.3 931.03,169.0 931.11,167.4 931.18,158.2 931.26,165.0 931.34,175.4 931.41,171.2 931.49,169.6 931.56,163.9 931.64,172.6 931.72,162.0 931.79,171.3 931.87,173.5 931.94,171.6 932.02,174.6 932.09,156.2 932.17,189.2 932.25,173.3 932.32,185.1 932.40,167.5 932.47,180.0 932.55,179.9 932.62,172.5 932.70,169.5 932.77,166.2 932.85,172.7 932.92,176.8 933.00,174.9" fill="none" stroke="#ffff00" stroke-width="0.8" stroke-linejoin="miter"/><circle cx="46.5" cy="146" r="1.6" fill="none" stroke="#ffff00" stroke-width="1"/><circle cx="933" cy="174.9" r="1.3" fill="#00ff00"/><polyline points="46.00,282.5 129.33,278.5 178.08,283.6 212.67,279.5 239.50,278.5 261.42,278.3 279.95,274.8 296.00,269.0 310.16,263.2 322.83,268.5 334.29,270.2 344.75,262.0 354.37,286.4 363.28,278.3 371.58,272.0 379.34,269.5 386.63,267.4 393.50,274.1 400.00,273.7 406.17,256.4 412.03,257.4 417.62,252.6 422.97,256.4 428.09,244.7 432.99,237.8 437.71,249.8 442.25,263.0 446.62,259.3 450.84,257.6 454.91,267.5 458.86,259.9 462.67,253.6 466.37,253.0 469.96,262.4 473.45,255.5 476.83,242.2 480.13,231.5 483.33,250.4 486.46,242.2 489.50,246.0 492.47,246.3 495.37,238.4 498.19,249.8 500.96,261.2 503.66,253.6 506.30,240.3 508.89,242.8 511.42,241.0 514.00,234.2 519.00,249.0 523.90,231.7 528.80,243.2 534.60,238.3 542.00,250.6 546.90,240.8 550.20,247.3 551.90,241.6 556.80,268.7 559.20,245.7 563.40,272.8 566.60,259.7 568.30,284.3 570.80,255.6 574.00,267.1 575.70,262.1 577.30,268.7 580.60,287.6 582.30,252.3 585.60,269.5 587.20,257.2 592.10,253.9 593.00,267.1 596.20,255.6 599.50,234.2 602.00,244.9 605.30,257.2 607.70,244.1 609.40,255.6 614.30,237.5 616.80,252.3 620.10,231.7 622.50,247.3 624.20,240.8 625.52,245.2 626.49,245.4 627.45,251.2 628.40,240.3 629.34,254.5 630.28,245.1 631.21,248.5 632.13,247.4 633.04,249.5 633.95,254.0 634.85,247.7 635.74,245.0 636.63,244.0 637.51,242.1 638.39,248.6 639.25,244.6 640.11,253.4 640.97,245.1 641.82,244.0 642.66,238.1 643.50,253.2 644.33,256.1 645.16,238.6 645.98,235.1 646.80,251.6 647.61,235.9 648.41,246.4 649.21,231.4 650.00,233.5 650.79,241.8 651.57,237.6 652.35,230.5 653.13,228.0 653.89,249.3 654.66,236.9 655.42,244.9 656.17,227.0 656.92,226.6 657.66,236.8 658.40,229.7 659.14,241.7 659.87,230.4 660.59,243.8 661.32,240.6 662.03,238.5 662.75,235.9 663.46,241.9 664.16,253.6 664.86,262.4 665.56,254.5 666.25,251.3 666.94,245.8 667.63,255.0 668.31,242.2 668.99,247.6 669.66,253.4 670.33,250.1 671.00,246.1 671.66,257.3 672.32,249.8 672.97,250.7 673.62,248.2 674.27,251.2 674.92,268.7 675.56,245.6 676.20,257.6 676.83,247.6 677.46,261.7 678.09,243.9 678.71,242.7 679.33,241.5 679.95,242.0 680.57,235.8 681.18,246.3 681.79,239.8 682.39,251.2 683.00,254.8 683.60,250.9 684.19,246.6 684.79,241.3 685.38,241.7 685.97,246.6 686.55,240.8 687.13,240.1 687.71,245.7 688.29,242.9 688.86,247.7 689.43,246.7 690.00,252.3 690.57,252.1 691.13,258.5 691.69,253.2 692.25,248.4 692.80,257.2 693.36,257.0 693.91,248.1 694.46,256.0 695.00,258.6 695.54,260.2 696.08,265.7 696.62,249.8 697.16,251.1 697.69,247.7 698.22,248.4 698.75,251.0 699.28,247.5 699.80,255.0 700.32,249.6 700.84,248.9 701.36,255.8 701.87,246.3 702.39,243.4 702.90,253.4 703.40,255.6 703.91,258.0 704.41,257.0 704.92,254.0 705.42,246.3 705.91,256.1 706.41,256.4 706.90,247.9 707.40,245.1 707.89,283.4 708.37,247.4 708.86,249.7 709.34,256.8 709.82,252.8 710.30,267.4 710.78,252.5 711.26,289.0 711.73,246.8 712.21,251.0 712.68,260.9 713.14,260.3 713.61,250.8 714.08,256.7 714.54,246.6 715.00,250.2 715.46,245.8 715.92,263.3 716.38,257.1 716.83,237.0 717.28,242.7 717.73,248.6 718.18,227.6 718.63,265.1 719.08,242.8 719.52,257.4 719.96,248.1 720.41,250.4 720.85,243.6 721.28,261.8 721.72,250.9 722.15,237.3 722.59,251.7 723.02,241.2 723.45,228.3 723.88,234.9 724.31,254.7 724.73,235.0 725.15,239.2 725.58,240.0 726.00,234.8 726.42,229.1 726.84,244.5 727.25,234.0 727.67,248.5 728.08,239.8 728.49,234.4 728.91,236.8 729.32,244.9 729.72,233.1 730.13,239.2 730.54,232.5 730.94,234.5 731.34,241.2 731.74,244.0 732.14,250.2 732.54,234.4 732.94,249.8 733.34,253.7 733.73,244.6 734.12,249.4 734.52,245.6 734.91,237.4 735.30,243.9 735.69,234.6 736.07,242.2 736.46,233.8 736.84,234.9 737.23,245.1 737.61,238.9 737.99,236.5 738.37,247.7 738.75,258.2 739.13,233.4 739.50,264.9 739.88,248.4 740.25,251.1 740.63,234.2 741.00,238.3 741.37,241.7 741.74,243.2 742.10,232.9 742.47,249.3 742.84,237.3 743.20,247.6 743.57,247.9 743.93,239.8 744.29,245.2 744.65,242.6 745.01,240.6 745.37,259.3 745.73,245.4 746.08,245.5 746.44,238.1 746.79,238.9 747.15,245.1 747.50,247.0 747.85,241.0 748.20,241.7 748.55,261.6 748.90,241.6 749.24,239.1 749.59,248.8 749.93,241.9 750.28,244.8 750.62,248.6 750.96,258.0 751.30,244.5 751.64,242.9 751.98,247.9 752.32,244.4 752.66,253.3 752.99,241.8 753.33,244.2 753.66,249.0 754.00,259.6 754.33,282.9 754.66,251.0 754.99,253.5 755.32,264.0 755.65,251.1 755.98,241.3 756.31,247.9 756.63,244.6 756.96,248.8 757.28,252.0 757.61,256.2 757.93,247.6 758.25,244.9 758.57,247.3 758.89,249.0 759.21,246.9 759.53,254.1 759.85,239.7 760.16,242.4 760.48,256.9 760.80,243.2 761.11,245.1 761.42,266.1 761.74,244.5 762.05,244.0 762.36,253.3 762.67,256.2 762.98,250.2 763.29,267.4 763.60,259.8 763.90,247.6 764.21,252.9 764.51,253.7 764.82,245.1 765.12,247.1 765.43,256.7 765.73,268.1 766.03,269.8 766.33,251.8 766.63,253.5 766.93,244.3 767.23,254.8 767.53,253.6 767.82,251.7 768.12,255.8 768.42,257.6 768.71,260.1 769.01,257.9 769.30,253.9 769.59,258.1 769.88,253.5 770.18,260.4 770.47,256.3 770.76,259.6 771.05,258.4 771.34,255.1 771.62,270.4 771.91,278.4 772.20,266.4 772.48,266.3 772.77,270.3 773.05,259.5 773.34,261.9 773.62,261.9 773.90,256.0 774.18,272.8 774.47,252.8 774.75,255.6 775.03,267.4 775.31,256.7 775.58,254.8 775.86,303.5 776.14,265.5 776.42,258.0 776.69,266.4 776.97,270.8 777.24,267.3 777.52,266.9 777.79,257.5 778.06,261.2 778.34,265.1 778.61,249.1 778.88,264.7 779.15,259.9 779.42,252.2 779.69,247.7 779.96,263.6 780.22,262.7 780.49,257.7 780.76,259.5 781.02,258.9 781.29,258.1 781.56,266.0 781.82,265.9 782.08,256.7 782.35,264.8 782.61,258.9 782.87,276.3 783.13,259.3 783.40,264.7 783.66,256.4 783.92,248.2 784.18,265.0 784.43,263.4 784.69,260.2 784.95,261.6 785.21,270.1 785.46,271.0 785.72,255.2 785.98,251.7 786.23,284.7 786.48,253.3 786.74,252.8 786.99,254.3 787.24,254.7 787.50,270.1 787.75,262.4 788.00,252.5 788.25,258.0 788.50,254.1 788.75,264.0 789.00,253.3 789.25,253.8 789.50,268.1 789.74,257.2 789.99,247.3 790.24,275.6 790.48,266.7 790.73,255.0 790.97,257.6 791.22,263.5 791.46,268.1 791.71,255.2 791.95,276.4 792.19,250.6 792.44,277.5 792.68,265.8 792.92,263.7 793.16,261.3 793.40,257.6 793.64,264.6 793.88,255.5 794.12,266.6 794.36,265.9 794.59,253.9 794.83,268.1 795.07,264.8 795.30,278.3 795.54,261.0 795.78,266.3 796.01,260.1 796.24,262.2 796.48,266.9 796.71,280.3 796.95,267.1 797.18,262.6 797.41,265.2 797.64,264.5 797.87,269.0 798.11,269.7 798.34,256.8 798.57,259.0 798.80,267.5 799.02,259.2 799.25,277.4 799.48,263.0 799.71,269.8 799.94,269.3 800.16,266.0 800.39,264.0 800.62,269.6 800.84,271.9 801.07,268.2 801.29,260.0 801.52,257.8 801.74,257.2 801.97,260.3 802.19,254.7 802.41,280.3 802.63,257.6 802.86,267.4 803.08,282.7 803.30,271.3 803.52,260.2 803.74,263.2 803.96,278.7 804.18,270.0 804.40,258.7 804.62,254.5 804.84,258.4 805.05,260.6 805.27,259.6 805.49,259.9 805.71,266.9 805.92,271.1 806.14,265.6 806.35,281.7 806.57,264.5 806.78,270.6 807.00,272.0 807.21,267.8 807.43,264.6 807.64,267.5 807.85,276.9 808.07,258.4 808.28,273.0 808.49,266.2 808.70,262.5 808.91,265.0 809.12,268.4 809.33,259.5 809.54,276.8 809.75,265.0 809.96,275.8 810.17,267.5 810.38,271.4 810.59,262.4 810.80,267.2 811.00,273.5 811.21,273.6 811.42,276.9 811.62,266.7 811.83,262.0 812.03,260.4 812.24,262.4 812.45,280.2 812.65,265.3 812.85,272.9 813.06,278.1 813.26,277.9 813.46,262.2 813.67,281.1 813.87,261.3 814.07,271.1 814.27,270.3 814.48,259.1 814.68,275.0 814.88,268.0 815.08,260.1 815.28,264.4 815.48,273.3 815.68,278.9 815.88,261.5 816.08,264.9 816.27,258.1 816.47,275.2 816.67,272.7 816.87,263.6 817.07,270.5 817.26,256.1 817.46,270.9 817.66,278.0 817.85,267.3 818.05,279.0 818.24,267.9 818.44,256.3 818.63,262.4 818.83,265.6 819.02,261.5 819.21,258.7 819.41,279.8 819.60,254.3 819.79,256.4 819.99,264.8 820.18,270.2 820.37,260.1 820.56,263.3 820.75,274.3 820.94,261.0 821.14,262.7 821.33,261.4 821.52,284.3 821.71,262.5 821.89,264.5 822.08,256.3 822.27,260.0 822.46,259.5 822.65,261.1 822.84,267.8 823.03,254.8 823.21,265.4 823.40,250.9 823.59,260.0 823.77,262.9 823.96,262.5 824.15,260.5 824.33,260.4 824.52,269.5 824.70,262.7 824.89,277.8 825.07,258.9 825.26,269.9 825.44,264.5 825.62,278.3 825.81,259.3 825.99,278.6 826.17,260.7 826.36,258.2 826.54,271.3 826.72,263.8 826.90,263.9 827.08,260.8 827.26,262.4 827.44,262.1 827.63,253.9 827.81,280.6 827.99,252.9 828.17,253.9 828.35,259.0 828.52,256.4 828.70,257.6 828.88,262.4 829.06,269.1 829.24,271.2 829.42,259.9 829.59,258.0 829.77,258.0 829.95,251.4 830.13,266.2 830.30,260.4 830.48,265.9 830.66,256.5 830.83,274.3 831.01,260.6 831.18,256.5 831.36,267.5 831.53,253.7 831.71,264.2 831.88,251.3 832.06,266.7 832.23,256.3 832.40,265.7 832.58,258.6 832.75,256.7 832.92,262.4 833.10,260.5 833.27,260.5 833.44,258.8 833.61,261.4 833.78,264.1 833.95,263.5 834.13,264.2 834.30,271.6 834.47,286.0 834.64,258.5 834.81,276.5 834.98,267.6 835.15,273.1 835.32,272.5 835.49,273.4 835.66,266.0 835.82,277.2 835.99,261.8 836.16,267.4 836.33,278.0 836.50,276.4 836.66,266.5 836.83,261.5 837.00,272.1 837.17,290.3 837.33,276.0 837.50,269.3 837.66,273.1 837.83,267.8 838.00,286.6 838.16,262.0 838.33,284.4 838.49,269.2 838.66,272.0 838.82,265.8 838.99,274.5 839.15,274.7 839.31,275.3 839.48,265.3 839.64,269.9 839.80,275.1 839.97,274.2 840.13,276.1 840.29,284.7 840.45,264.2 840.62,266.9 840.78,264.0 840.94,272.1 841.10,290.0 841.26,286.7 841.42,282.0 841.59,277.0 841.75,280.0 841.91,267.3 842.07,270.7 842.23,279.3 842.39,282.2 842.55,280.5 842.71,278.6 842.86,278.7 843.02,289.8 843.18,272.1 843.34,274.8 843.50,265.2 843.66,283.4 843.81,280.3 843.97,273.9 844.13,280.6 844.29,271.9 844.44,275.1 844.60,283.1 844.76,275.0 844.91,279.6 845.07,270.0 845.23,285.2 845.38,284.0 845.54,282.7 845.69,291.9 845.85,289.6 846.00,272.7 846.16,278.4 846.31,274.5 846.47,276.2 846.62,279.0 846.78,283.3 846.93,274.8 847.08,284.9 847.24,275.0 847.39,295.9 847.54,280.9 847.70,273.9 847.85,281.6 848.00,285.1 848.15,284.0 848.31,284.6 848.46,290.7 848.61,284.8 848.76,288.7 848.91,283.2 849.06,281.6 849.21,281.6 849.36,278.8 849.52,304.6 849.67,295.4 849.82,285.1 849.97,295.2 850.12,279.7 850.27,281.3 850.41,290.7 850.56,283.6 850.71,289.3 850.86,287.7 851.01,282.2 851.16,285.8 851.31,295.6 851.46,298.4 851.60,284.3 851.75,280.1 851.90,283.8 852.05,285.5 852.19,284.8 852.34,285.2 852.49,281.3 852.63,285.1 852.78,287.4 852.93,290.6 853.07,288.7 853.22,287.7 853.37,285.9 853.51,301.5 853.66,289.4 853.80,279.9 853.95,289.3 854.09,282.3 854.24,283.5 854.38,277.3 854.53,284.6 854.67,295.0 854.81,284.0 854.96,278.0 855.10,277.4 855.24,284.3 855.39,289.0 855.53,284.5 855.67,297.2 855.82,281.6 855.96,281.8 856.10,289.7 856.24,282.1 856.39,279.5 856.53,280.2 856.67,280.9 856.81,283.4 856.95,285.1 857.10,284.8 857.24,285.2 857.38,288.6 857.52,285.5 857.66,295.8 857.80,284.9 857.94,282.2 858.08,288.7 858.22,278.7 858.36,277.4 858.50,277.5 858.64,283.5 858.78,278.6 858.92,294.8 859.06,292.8 859.20,293.4 859.34,286.4 859.47,305.6 859.61,287.5 859.75,278.5 859.89,284.9 860.03,295.8 860.16,284.3 860.30,282.8 860.44,281.5 860.58,291.7 860.71,287.8 860.85,285.2 860.99,283.6 861.12,278.3 861.26,284.3 861.40,281.8 861.53,284.4 861.67,287.2 861.81,294.8 861.94,276.3 862.08,278.5 862.21,281.2 862.35,283.4 862.48,280.5 862.62,290.0 862.75,297.8 862.89,284.4 863.02,286.9 863.16,291.7 863.29,288.2 863.42,275.8 863.56,281.8 863.69,300.3 863.83,291.6 863.96,282.3 864.09,284.2 864.23,291.6 864.36,285.5 864.49,279.6 864.62,310.6 864.76,280.1 864.89,291.7 865.02,292.3 865.15,286.2 865.29,286.0 865.42,296.1 865.55,293.0 865.68,284.4 865.81,292.6 865.94,301.3 866.08,289.2 866.21,287.9 866.34,281.8 866.47,284.8 866.60,285.1 866.73,280.4 866.86,285.9 866.99,286.6 867.12,285.8 867.25,289.7 867.38,283.6 867.51,289.0 867.64,279.1 867.77,287.1 867.90,281.2 868.03,298.5 868.16,285.4 868.28,296.4 868.41,289.4 868.54,291.2 868.67,309.8 868.80,285.0 868.93,289.4 869.05,294.4 869.18,288.1 869.31,282.5 869.44,301.5 869.56,294.8 869.69,284.3 869.82,277.3 869.95,283.0 870.07,295.1 870.20,296.0 870.33,299.3 870.45,302.3 870.58,299.2 870.71,292.3 870.83,289.0 870.96,327.8 871.08,299.3 871.21,287.6 871.33,287.9 871.46,298.0 871.59,281.3 871.71,299.8 871.84,300.3 871.96,294.3 872.09,291.7 872.21,281.2 872.33,297.1 872.46,283.7 872.58,288.3 872.71,281.5 872.83,283.6 872.96,280.8 873.08,286.3 873.20,287.1 873.33,289.7 873.45,292.9 873.57,286.9 873.70,299.4 873.82,295.4 873.94,277.6 874.06,290.1 874.19,289.2 874.31,286.0 874.43,291.3 874.55,294.0 874.68,283.9 874.80,290.3 874.92,279.2 875.04,286.0 875.16,289.7 875.28,289.0 875.41,282.9 875.53,298.5 875.65,276.8 875.77,293.3 875.89,281.8 876.01,309.2 876.13,284.4 876.25,294.7 876.37,281.6 876.49,287.0 876.61,274.9 876.73,292.0 876.85,276.8 876.97,282.1 877.09,288.9 877.21,280.8 877.33,287.5 877.45,287.9 877.57,281.0 877.69,280.0 877.81,287.5 877.93,282.6 878.05,295.6 878.16,278.8 878.28,275.7 878.40,273.7 878.52,286.8 878.64,281.1 878.76,281.4 878.87,293.6 878.99,297.1 879.11,282.5 879.23,274.7 879.34,282.4 879.46,284.4 879.58,276.4 879.70,293.4 879.81,276.1 879.93,299.2 880.05,280.2 880.16,292.9 880.28,282.0 880.40,288.7 880.51,276.9 880.63,285.6 880.75,281.7 880.86,296.6 880.98,281.5 881.09,293.2 881.21,283.4 881.32,294.2 881.44,302.9 881.55,299.0 881.67,290.0 881.79,320.2 881.90,295.5 882.02,305.4 882.13,295.2 882.24,288.2 882.36,297.2 882.47,285.3 882.59,294.2 882.70,291.3 882.82,289.9 882.93,286.6 883.04,290.2 883.16,304.2 883.27,286.9 883.39,289.1 883.50,298.2 883.61,287.5 883.73,322.4 883.84,288.3 883.95,294.4 884.06,287.4 884.18,304.0 884.29,288.2 884.40,292.6 884.52,330.0 884.63,290.8 884.74,302.5 884.85,285.8 884.96,296.7 885.08,299.0 885.19,293.3 885.30,288.8 885.41,290.0 885.52,286.8 885.63,287.6 885.75,277.9 885.86,288.2 885.97,293.7 886.08,281.7 886.19,292.1 886.30,296.3 886.41,323.1 886.52,288.1 886.63,290.3 886.74,303.3 886.85,283.9 886.96,303.0 887.07,292.5 887.18,291.3 887.29,294.7 887.40,294.5 887.51,289.3 887.62,290.7 887.73,295.1 887.84,296.0 887.95,292.3 888.06,292.8 888.17,295.6 888.28,284.9 888.39,288.5 888.50,279.8 888.61,300.7 888.71,288.0 888.82,291.0 888.93,296.4 889.04,292.9 889.15,287.7 889.26,292.9 889.36,298.5 889.47,297.2 889.58,287.9 889.69,304.7 889.80,303.3 889.90,289.3 890.01,290.8 890.12,287.2 890.23,295.1 890.33,297.2 890.44,282.7 890.55,296.9 890.65,289.3 890.76,305.5 890.87,293.9 890.97,293.0 891.08,291.7 891.19,310.7 891.29,287.2 891.40,283.6 891.51,289.8 891.61,288.1 891.72,286.4 891.82,284.0 891.93,287.0 892.04,293.3 892.14,305.0 892.25,294.6 892.35,307.7 892.46,292.9 892.56,285.0 892.67,285.4 892.77,298.6 892.88,290.1 892.98,297.6 893.09,288.1 893.19,299.9 893.30,304.4 893.40,292.5 893.51,284.4 893.61,295.4 893.71,294.4 893.82,287.4 893.92,291.5 894.03,288.9 894.13,291.2 894.23,294.4 894.34,292.1 894.44,291.3 894.54,301.2 894.65,297.9 894.75,301.3 894.85,290.9 894.96,294.2 895.06,291.3 895.16,295.0 895.27,289.6 895.37,289.1 895.47,307.0 895.57,309.8 895.68,286.9 895.78,298.3 895.88,279.8 895.98,294.9 896.09,297.2 896.19,309.4 896.29,291.3 896.39,290.8 896.49,308.6 896.60,288.0 896.70,307.7 896.80,290.0 896.90,282.6 897.00,310.7 897.10,283.9 897.20,286.0 897.31,295.0 897.41,288.5 897.51,299.8 897.61,287.0 897.71,279.0 897.81,294.4 897.91,314.1 898.01,314.3 898.11,293.6 898.21,287.3 898.31,275.7 898.41,281.6 898.51,283.3 898.61,288.5 898.71,286.2 898.81,286.7 898.91,301.3 899.01,282.8 899.11,290.4 899.21,297.7 899.31,276.6 899.41,280.9 899.51,301.7 899.61,287.0 899.71,310.5 899.81,282.2 899.91,292.2 900.01,287.9 900.10,283.0 900.20,281.1 900.30,306.7 900.40,284.4 900.50,290.4 900.60,291.5 900.70,278.4 900.79,282.9 900.89,281.3 900.99,292.9 901.09,289.2 901.19,285.7 901.28,285.2 901.38,286.6 901.48,279.5 901.58,296.2 901.67,299.7 901.77,286.5 901.87,284.7 901.97,278.0 902.06,292.1 902.16,272.3 902.26,296.7 902.36,289.7 902.45,292.8 902.55,298.5 902.65,295.9 902.74,291.4 902.84,296.8 902.94,297.4 903.03,284.6 903.13,294.7 903.22,281.1 903.32,294.4 903.42,313.1 903.51,300.8 903.61,282.8 903.71,288.5 903.80,279.9 903.90,292.0 903.99,293.4 904.09,291.9 904.18,290.5 904.28,284.5 904.37,278.0 904.47,284.2 904.56,283.5 904.66,293.8 904.76,290.8 904.85,325.8 904.95,280.3 905.04,281.1 905.13,287.0 905.23,294.9 905.32,295.0 905.42,290.2 905.51,295.8 905.61,293.1 905.70,301.1 905.80,286.3 905.89,283.5 905.98,288.1 906.08,283.6 906.17,283.2 906.27,293.6 906.36,314.4 906.45,290.1 906.55,294.6 906.64,296.9 906.73,299.2 906.83,291.5 906.92,286.4 907.01,297.7 907.11,292.2 907.20,294.1 907.29,286.6 907.39,293.2 907.48,283.1 907.57,309.8 907.67,284.0 907.76,298.6 907.85,290.1 907.94,297.1 908.04,299.9 908.13,287.2 908.22,293.6 908.31,305.3 908.41,293.4 908.50,295.0 908.59,283.7 908.68,295.1 908.77,292.2 908.87,289.8 908.96,320.8 909.05,293.7 909.14,283.1 909.23,292.2 909.32,299.0 909.42,299.6 909.51,298.6 909.60,295.7 909.69,299.9 909.78,294.8 909.87,304.0 909.96,307.5 910.05,309.2 910.14,296.9 910.24,303.0 910.33,299.3 910.42,301.2 910.51,296.0 910.60,289.8 910.69,317.4 910.78,296.7 910.87,285.3 910.96,311.6 911.05,284.4 911.14,306.1 911.23,298.8 911.32,286.5 911.41,290.5 911.50,300.8 911.59,296.7 911.68,298.3 911.77,293.3 911.86,313.4 911.95,290.4 912.04,296.2 912.13,288.2 912.22,306.7 912.31,304.9 912.40,290.1 912.48,292.8 912.57,297.8 912.66,292.2 912.75,312.6 912.84,301.4 912.93,305.0 913.02,285.4 913.11,287.0 913.20,286.2 913.28,290.8 913.37,279.0 913.46,297.6 913.55,297.8 913.64,286.0 913.73,287.6 913.81,288.1 913.90,289.8 913.99,290.7 914.08,315.7 914.17,297.7 914.25,296.2 914.34,286.4 914.43,297.6 914.52,290.2 914.60,289.4 914.69,294.3 914.78,295.4 914.87,296.8 914.95,293.7 915.04,293.5 915.13,302.3 915.22,287.5 915.30,298.4 915.39,293.9 915.48,312.2 915.56,296.2 915.65,289.1 915.74,289.9 915.82,285.9 915.91,288.8 916.00,295.4 916.08,280.7 916.17,287.1 916.26,289.2 916.34,285.5 916.43,288.3 916.52,295.2 916.60,281.6 916.69,294.8 916.77,295.4 916.86,301.1 916.95,301.7 917.03,293.6 917.12,288.8 917.20,295.6 917.29,289.5 917.37,299.7 917.46,319.3 917.55,279.3 917.63,301.2 917.72,292.5 917.80,297.3 917.89,300.1 917.97,307.6 918.06,291.1 918.14,293.1 918.23,296.5 918.31,290.5 918.40,285.0 918.48,296.5 918.57,289.8 918.65,287.7 918.74,304.1 918.82,288.1 918.91,288.5 918.99,287.1 919.07,314.1 919.16,283.5 919.24,291.9 919.33,294.2 919.41,293.0 919.50,286.8 919.58,301.1 919.66,305.2 919.75,312.9 919.83,298.6 919.91,329.0 920.00,291.5 920.08,302.3 920.17,292.3 920.25,300.0 920.33,302.9 920.42,299.6 920.50,310.7 920.58,295.0 920.67,303.9 920.75,294.5 920.83,305.4 920.92,302.9 921.00,293.0 921.08,290.1 921.16,294.1 921.25,308.5 921.33,295.0 921.41,290.0 921.50,291.3 921.58,287.2 921.66,289.5 921.74,285.6 921.83,304.8 921.91,297.3 921.99,295.5 922.07,322.3 922.16,316.5 922.24,304.8 922.32,301.5 922.40,291.2 922.48,305.1 922.57,295.8 922.65,299.2 922.73,291.6 922.81,312.2 922.89,308.9 922.98,310.0 923.06,303.5 923.14,302.6 923.22,304.1 923.30,301.5 923.38,312.8 923.46,320.0 923.55,310.0 923.63,292.8 923.71,297.0 923.79,295.0 923.87,290.6 923.95,293.2 924.03,310.4 924.11,297.7 924.19,298.1 924.28,291.6 924.36,290.9 924.44,292.6 924.52,297.7 924.60,298.5 924.68,304.0 924.76,300.5 924.84,322.5 924.92,300.0 925.00,304.8 925.08,290.8 925.16,288.5 925.24,314.9 925.32,296.8 925.40,304.1 925.48,295.6 925.56,290.1 925.64,290.6 925.72,308.1 925.80,307.5 925.88,300.2 925.96,296.3 926.04,321.8 926.12,304.3 926.20,301.4 926.28,295.5 926.36,294.1 926.44,300.3 926.52,301.0 926.60,305.5 926.67,296.9 926.75,304.4 926.83,305.3 926.91,298.5 926.99,294.5 927.07,290.0 927.15,298.8 927.23,299.1 927.31,319.5 927.39,290.8 927.46,322.9 927.54,295.4 927.62,325.2 927.70,299.7 927.78,304.0 927.86,295.2 927.94,323.2 928.01,301.1 928.09,299.9 928.17,306.3 928.25,305.4 928.33,292.4 928.40,291.9 928.48,297.0 928.56,297.9 928.64,300.9 928.72,297.1 928.79,293.5 928.87,317.5 928.95,326.7 929.03,290.5 929.11,300.9 929.18,306.2 929.26,309.8 929.34,309.7 929.42,299.5 929.49,322.8 929.57,307.6 929.65,286.7 929.72,290.4 929.80,289.7 929.88,305.8 929.96,305.0 930.03,291.0 930.11,293.2 930.19,304.6 930.26,292.3 930.34,310.1 930.42,284.5 930.49,295.1 930.57,301.1 930.65,291.4 930.72,295.5 930.80,293.3 930.88,294.2 930.95,319.0 931.03,289.8 931.11,284.6 931.18,312.1 931.26,289.4 931.34,288.4 931.41,289.5 931.49,291.9 931.56,293.3 931.64,308.9 931.72,287.5 931.79,297.8 931.87,290.5 931.94,301.4 932.02,288.9 932.09,330.0 932.17,297.1 932.25,289.5 932.32,294.0 932.40,296.1 932.47,289.4 932.55,289.8 932.62,298.0 932.70,292.2 932.77,290.1 932.85,289.7 932.92,307.3 933.00,297.0" fill="none" stroke="#00ff00" stroke-width="0.8" stroke-linejoin="miter"/><circle cx="46.5" cy="282.5" r="1.6" fill="none" stroke="#ffff00" stroke-width="1"/><circle cx="933" cy="297.0" r="1.3" fill="#00ff00"/><polyline points="46.00,385.4 129.33,419.1 178.08,392.4 212.67,390.4 239.50,397.9 261.42,388.2 279.95,419.4 296.00,380.0 310.16,399.3 322.83,390.5 334.29,393.3 344.75,394.6 354.37,392.1 363.28,392.8 371.58,390.5 379.34,397.9 386.63,392.3 393.50,395.6 400.00,391.3 406.17,399.3 412.03,388.3 417.62,393.3 422.97,409.4 428.09,392.3 432.99,410.0 437.71,385.4 442.25,413.8 446.62,387.9 450.84,396.1 454.91,401.8 458.86,386.6 462.67,396.7 466.37,387.9 469.96,408.1 473.45,392.3 476.83,422.6 480.13,402.4 483.33,387.3 486.46,397.4 489.50,392.3 492.47,395.9 495.37,387.9 498.19,399.3 500.96,394.8 503.66,396.7 506.30,390.0 508.89,394.2 511.42,392.6 514.00,395.3 518.20,392.8 520.60,396.9 523.90,384.6 528.00,397.8 532.10,402.7 534.60,393.6 536.20,397.8 538.70,386.3 540.30,410.9 544.50,389.5 546.90,397.8 548.60,391.2 550.20,404.3 551.90,387.9 554.30,412.6 556.80,392.8 559.20,394.5 562.50,390.4 565.80,395.3 568.30,404.3 570.80,390.4 573.20,388.7 576.50,406.8 579.80,385.4 582.30,401.0 584.70,393.6 587.20,399.4 590.50,384.6 592.10,406.0 594.60,388.7 597.10,402.7 599.50,383.0 602.00,386.3 603.60,412.6 606.90,383.0 610.20,417.5 612.70,388.7 615.10,390.4 616.80,420.0 619.30,384.6 621.70,402.7 624.20,396.1 625.52,387.5 626.49,392.1 627.45,389.9 628.40,399.6 629.34,405.6 630.28,385.8 631.21,402.7 632.13,392.9 633.04,391.8 633.95,395.6 634.85,397.9 635.74,394.0 636.63,393.4 637.51,406.5 638.39,397.6 639.25,390.4 640.11,392.6 640.97,397.1 641.82,391.4 642.66,393.4 643.50,399.7 644.33,396.3 645.16,388.6 645.98,390.7 646.80,394.5 647.61,392.6 648.41,395.8 649.21,404.5 650.00,395.9 650.79,393.8 651.57,393.4 652.35,404.8 653.13,384.5 653.89,392.2 654.66,421.3 655.42,387.1 656.17,403.3 656.92,385.6 657.66,390.1 658.40,388.1 659.14,390.4 659.87,379.7 660.59,390.6 661.32,396.4 662.03,385.2 662.75,383.5 663.46,392.4 664.16,386.3 664.86,383.9 665.56,395.9 666.25,382.9 666.94,391.2 667.63,388.4 668.31,391.4 668.99,384.6 669.66,386.8 670.33,389.0 671.00,390.0 671.66,383.4 672.32,389.9 672.97,391.1 673.62,403.0 674.27,380.3 674.92,378.2 675.56,377.2 676.20,369.4 676.83,383.3 677.46,373.4 678.09,378.6 678.71,386.5 679.33,382.6 679.95,383.3 680.57,382.4 681.18,383.8 681.79,381.4 682.39,368.2 683.00,394.0 683.60,378.2 684.19,373.7 684.79,371.8 685.38,395.7 685.97,371.2 686.55,381.0 687.13,375.4 687.71,375.3 688.29,371.2 688.86,370.0 689.43,374.0 690.00,385.2 690.57,380.1 691.13,380.3 691.69,387.7 692.25,382.0 692.80,382.8 693.36,368.0 693.91,375.3 694.46,370.9 695.00,367.9 695.54,370.8 696.08,373.4 696.62,380.7 697.16,382.2 697.69,381.0 698.22,375.4 698.75,386.3 699.28,384.2 699.80,379.4 700.32,397.5 700.84,383.0 701.36,408.8 701.87,392.9 702.39,385.9 702.90,385.5 703.40,377.4 703.91,385.9 704.41,381.8 704.92,381.8 705.42,393.4 705.91,376.4 706.41,407.3 706.90,383.8 707.40,389.7 707.89,394.2 708.37,390.6 708.86,383.3 709.34,379.6 709.82,389.0 710.30,380.8 710.78,393.0 711.26,382.1 711.73,381.1 712.21,387.7 712.68,392.9 713.14,394.9 713.61,399.2 714.08,383.6 714.54,384.1 715.00,395.4 715.46,398.9 715.92,384.6 716.38,385.2 716.83,390.0 717.28,409.5 717.73,386.7 718.18,395.6 718.63,390.5 719.08,396.5 719.52,386.3 719.96,388.9 720.41,406.3 720.85,387.2 721.28,393.7 721.72,387.1 722.15,394.3 722.59,390.4 723.02,389.7 723.45,394.7 723.88,401.1 724.31,394.0 724.73,404.6 725.15,386.4 725.58,394.6 726.00,417.4 726.42,392.3 726.84,392.5 727.25,387.9 727.67,391.7 728.08,406.5 728.49,427.3 728.91,380.4 729.32,389.9 729.72,392.9 730.13,397.5 730.54,386.2 730.94,383.7 731.34,388.5 731.74,398.8 732.14,395.2 732.54,383.9 732.94,394.2 733.34,390.3 733.73,418.4 734.12,391.1 734.52,385.8 734.91,387.1 735.30,387.1 735.69,396.1 736.07,396.6 736.46,393.9 736.84,394.8 737.23,390.8 737.61,394.6 737.99,385.1 738.37,382.6 738.75,393.2 739.13,389.2 739.50,386.9 739.88,385.8 740.25,394.6 740.63,396.6 741.00,416.3 741.37,407.3 741.74,393.4 742.10,402.2 742.47,395.1 742.84,389.3 743.20,398.8 743.57,395.1 743.93,387.1 744.29,395.4 744.65,389.5 745.01,385.4 745.37,398.7 745.73,400.6 746.08,390.9 746.44,395.3 746.79,400.0 747.15,398.9 747.50,392.3 747.85,397.6 748.20,391.7 748.55,398.3 748.90,398.7 749.24,398.8 749.59,388.9 749.93,402.0 750.28,403.1 750.62,406.7 750.96,390.4 751.30,386.2 751.64,398.7 751.98,382.0 752.32,389.7 752.66,393.5 752.99,393.8 753.33,387.0 753.66,392.0 754.00,390.5 754.33,403.4 754.66,394.8 754.99,389.4 755.32,401.6 755.65,401.2 755.98,402.2 756.31,405.4 756.63,400.4 756.96,404.1 757.28,424.5 757.61,399.8 757.93,401.0 758.25,397.6 758.57,405.8 758.89,390.0 759.21,410.5 759.53,400.9 759.85,414.2 760.16,399.0 760.48,400.7 760.80,399.0 761.11,404.4 761.42,399.0 761.74,391.6 762.05,397.9 762.36,396.7 762.67,402.0 762.98,392.2 763.29,396.4 763.60,386.9 763.90,389.2 764.21,393.8 764.51,386.1 764.82,378.2 765.12,385.9 765.43,386.0 765.73,385.0 766.03,384.1 766.33,372.7 766.63,382.8 766.93,392.6 767.23,380.8 767.53,380.4 767.82,382.7 768.12,379.5 768.42,376.8 768.71,382.0 769.01,385.5 769.30,395.5 769.59,384.0 769.88,380.0 770.18,399.5 770.47,375.0 770.76,380.8 771.05,386.3 771.34,382.5 771.62,378.6 771.91,381.8 772.20,384.8 772.48,376.2 772.77,378.5 773.05,371.6 773.34,384.5 773.62,379.8 773.90,393.5 774.18,384.6 774.47,375.2 774.75,371.4 775.03,373.6 775.31,388.7 775.58,384.3 775.86,377.7 776.14,372.6 776.42,386.7 776.69,388.9 776.97,385.7 777.24,384.4 777.52,388.9 777.79,394.0 778.06,386.8 778.34,374.2 778.61,377.2 778.88,377.1 779.15,381.3 779.42,382.3 779.69,385.0 779.96,387.9 780.22,387.8 780.49,398.9 780.76,382.0 781.02,382.6 781.29,383.2 781.56,375.6 781.82,398.5 782.08,391.7 782.35,380.1 782.61,385.5 782.87,382.3 783.13,382.0 783.40,379.7 783.66,378.1 783.92,380.2 784.18,382.2 784.43,384.1 784.69,392.5 784.95,384.7 785.21,386.0 785.46,382.6 785.72,394.7 785.98,380.0 786.23,380.7 786.48,396.8 786.74,382.5 786.99,384.4 787.24,405.2 787.50,394.4 787.75,391.0 788.00,385.1 788.25,386.4 788.50,400.8 788.75,387.4 789.00,388.7 789.25,406.0 789.50,387.2 789.74,396.4 789.99,402.5 790.24,391.8 790.48,393.1 790.73,387.1 790.97,403.1 791.22,402.2 791.46,401.0 791.71,389.8 791.95,390.6 792.19,386.9 792.44,391.4 792.68,388.8 792.92,393.2 793.16,397.7 793.40,394.9 793.64,397.9 793.88,393.6 794.12,414.8 794.36,404.7 794.59,406.1 794.83,397.9 795.07,420.5 795.30,400.4 795.54,393.9 795.78,397.9 796.01,396.4 796.24,405.7 796.48,399.6 796.71,412.0 796.95,398.7 797.18,412.4 797.41,400.8 797.64,397.7 797.87,395.2 798.11,400.6 798.34,393.8 798.57,397.1 798.80,395.2 799.02,394.3 799.25,386.9 799.48,393.2 799.71,389.2 799.94,393.9 800.16,393.2 800.39,392.7 800.62,403.4 800.84,399.8 801.07,398.4 801.29,388.7 801.52,391.1 801.74,391.9 801.97,397.5 802.19,392.1 802.41,392.9 802.63,394.0 802.86,400.5 803.08,389.3 803.30,408.0 803.52,394.5 803.74,392.5 803.96,391.9 804.18,395.2 804.40,397.3 804.62,397.6 804.84,390.5 805.05,386.5 805.27,386.8 805.49,395.4 805.71,394.0 805.92,402.3 806.14,400.3 806.35,406.0 806.57,393.5 806.78,398.1 807.00,402.5 807.21,396.9 807.43,396.4 807.64,407.2 807.85,386.3 808.07,404.5 808.28,393.1 808.49,384.4 808.70,407.5 808.91,401.3 809.12,390.4 809.33,389.6 809.54,392.6 809.75,389.8 809.96,392.3 810.17,390.2 810.38,399.9 810.59,390.0 810.80,386.7 811.00,397.9 811.21,390.4 811.42,405.9 811.62,395.7 811.83,381.3 812.03,393.0 812.24,400.6 812.45,390.2 812.65,393.3 812.85,391.4 813.06,390.6 813.26,403.5 813.46,401.7 813.67,395.5 813.87,416.8 814.07,398.7 814.27,390.3 814.48,398.7 814.68,398.6 814.88,399.1 815.08,389.6 815.28,401.8 815.48,387.6 815.68,389.0 815.88,401.7 816.08,393.5 816.27,393.8 816.47,390.8 816.67,391.0 816.87,391.3 817.07,412.6 817.26,391.4 817.46,400.6 817.66,393.2 817.85,407.4 818.05,384.6 818.24,412.4 818.44,406.2 818.63,407.2 818.83,408.6 819.02,419.2 819.21,385.9 819.41,396.4 819.60,395.7 819.79,387.0 819.99,425.2 820.18,391.9 820.37,397.7 820.56,391.8 820.75,395.0 820.94,388.3 821.14,391.2 821.33,386.4 821.52,401.7 821.71,387.9 821.89,394.9 822.08,412.9 822.27,383.4 822.46,400.2 822.65,401.2 822.84,397.5 823.03,391.2 823.21,396.1 823.40,396.7 823.59,386.9 823.77,397.1 823.96,398.8 824.15,391.4 824.33,388.7 824.52,400.8 824.70,387.8 824.89,407.5 825.07,388.5 825.26,393.3 825.44,394.0 825.62,392.6 825.81,394.5 825.99,402.3 826.17,398.5 826.36,409.1 826.54,399.1 826.72,389.7 826.90,402.8 827.08,386.9 827.26,394.8 827.44,397.0 827.63,393.4 827.81,395.8 827.99,386.4 828.17,402.1 828.35,387.6 828.52,394.6 828.70,393.8 828.88,389.3 829.06,423.4 829.24,386.4 829.42,405.2 829.59,398.0 829.77,403.4 829.95,403.4 830.13,405.6 830.30,390.6 830.48,392.2 830.66,397.2 830.83,387.3 831.01,397.5 831.18,393.0 831.36,418.8 831.53,399.8 831.71,396.4 831.88,403.4 832.06,391.6 832.23,398.0 832.40,389.6 832.58,403.5 832.75,395.2 832.92,392.1 833.10,396.6 833.27,396.6 833.44,399.2 833.61,398.7 833.78,401.6 833.95,392.4 834.13,390.8 834.30,410.2 834.47,388.2 834.64,396.8 834.81,408.4 834.98,400.1 835.15,409.1 835.32,390.9 835.49,394.4 835.66,404.6 835.82,406.1 835.99,404.1 836.16,396.0 836.33,394.8 836.50,388.6 836.66,391.2 836.83,407.8 837.00,396.1 837.17,395.1 837.33,397.4 837.50,408.9 837.66,400.6 837.83,404.1 838.00,390.2 838.16,390.9 838.33,397.6 838.49,400.9 838.66,391.5 838.82,395.8 838.99,391.3 839.15,397.4 839.31,400.8 839.48,400.1 839.64,418.8 839.80,401.5 839.97,408.1 840.13,401.1 840.29,395.9 840.45,397.7 840.62,398.5 840.78,399.4 840.94,390.3 841.10,396.1 841.26,393.5 841.42,396.5 841.59,390.2 841.75,398.3 841.91,395.2 842.07,399.1 842.23,394.7 842.39,397.9 842.55,403.6 842.71,397.0 842.86,396.4 843.02,400.7 843.18,407.7 843.34,403.3 843.50,394.7 843.66,415.0 843.81,403.4 843.97,394.4 844.13,407.5 844.29,400.0 844.44,404.7 844.60,392.9 844.76,401.5 844.91,401.4 845.07,393.8 845.23,393.5 845.38,396.4 845.54,402.9 845.69,397.6 845.85,407.4 846.00,398.5 846.16,396.2 846.31,394.9 846.47,405.6 846.62,407.3 846.78,400.1 846.93,397.9 847.08,412.6 847.24,400.2 847.39,398.8 847.54,392.2 847.70,400.6 847.85,405.5 848.00,400.6 848.15,405.5 848.31,390.1 848.46,409.2 848.61,399.2 848.76,398.1 848.91,398.7 849.06,406.1 849.21,395.4 849.36,397.6 849.52,400.7 849.67,397.6 849.82,395.7 849.97,398.9 850.12,392.3 850.27,408.9 850.41,399.2 850.56,399.7 850.71,390.6 850.86,402.1 851.01,391.5 851.16,402.1 851.31,395.7 851.46,403.1 851.60,399.1 851.75,391.3 851.90,391.0 852.05,397.1 852.19,399.1 852.34,401.2 852.49,392.9 852.63,396.2 852.78,397.0 852.93,401.8 853.07,400.7 853.22,396.3 853.37,409.3 853.51,402.1 853.66,395.4 853.80,407.2 853.95,400.0 854.09,398.1 854.24,401.1 854.38,390.1 854.53,401.0 854.67,401.9 854.81,391.3 854.96,391.5 855.10,397.1 855.24,396.3 855.39,395.9 855.53,392.6 855.67,398.5 855.82,396.0 855.96,386.0 856.10,395.3 856.24,393.5 856.39,394.6 856.53,410.2 856.67,411.4 856.81,399.5 856.95,402.2 857.10,407.3 857.24,402.7 857.38,394.0 857.52,397.6 857.66,392.2 857.80,394.9 857.94,391.8 858.08,392.8 858.22,391.8 858.36,393.7 858.50,402.5 858.64,393.6 858.78,402.4 858.92,393.8 859.06,395.9 859.20,397.2 859.34,395.4 859.47,402.1 859.61,386.7 859.75,391.6 859.89,395.7 860.03,389.5 860.16,402.0 860.30,412.4 860.44,396.8 860.58,409.1 860.71,402.2 860.85,395.9 860.99,392.9 861.12,406.7 861.26,387.7 861.40,408.8 861.53,403.3 861.67,390.3 861.81,399.3 861.94,411.5 862.08,394.8 862.21,398.6 862.35,402.2 862.48,391.8 862.62,395.9 862.75,400.4 862.89,395.1 863.02,404.1 863.16,406.0 863.29,397.9 863.42,398.0 863.56,415.9 863.69,400.1 863.83,393.9 863.96,396.5 864.09,403.8 864.23,401.5 864.36,391.9 864.49,402.1 864.62,401.1 864.76,404.4 864.89,399.7 865.02,394.8 865.15,396.6 865.29,396.8 865.42,392.0 865.55,403.6 865.68,395.9 865.81,400.0 865.94,392.4 866.08,398.5 866.21,403.2 866.34,393.0 866.47,396.6 866.60,390.4 866.73,400.3 866.86,406.4 866.99,400.6 867.12,389.9 867.25,387.5 867.38,399.4 867.51,392.0 867.64,394.7 867.77,389.5 867.90,400.7 868.03,407.7 868.16,397.7 868.28,392.5 868.41,396.9 868.54,399.2 868.67,398.2 868.80,403.3 868.93,400.6 869.05,400.0 869.18,390.8 869.31,403.0 869.44,387.3 869.56,394.5 869.69,388.5 869.82,395.3 869.95,384.9 870.07,395.9 870.20,408.6 870.33,394.6 870.45,390.9 870.58,389.1 870.71,391.0 870.83,399.2 870.96,392.7 871.08,399.9 871.21,392.4 871.33,389.6 871.46,389.8 871.59,392.6 871.71,393.0 871.84,403.1 871.96,395.4 872.09,392.3 872.21,391.6 872.33,393.8 872.46,390.5 872.58,400.3 872.71,389.2 872.83,411.5 872.96,415.0 873.08,392.0 873.20,405.9 873.33,397.1 873.45,389.9 873.57,388.6 873.70,392.4 873.82,398.4 873.94,397.9 874.06,419.8 874.19,389.6 874.31,392.5 874.43,408.5 874.55,415.4 874.68,398.4 874.80,388.7 874.92,394.4 875.04,404.1 875.16,392.1 875.28,400.4 875.41,393.3 875.53,412.2 875.65,387.0 875.77,396.7 875.89,398.3 876.01,398.0 876.13,393.2 876.25,392.2 876.37,395.7 876.49,400.6 876.61,385.7 876.73,384.8 876.85,393.0 876.97,403.2 877.09,398.7 877.21,408.7 877.33,395.2 877.45,387.1 877.57,399.6 877.69,396.4 877.81,386.1 877.93,402.1 878.05,389.2 878.16,388.8 878.28,399.0 878.40,389.2 878.52,408.3 878.64,404.6 878.76,393.8 878.87,410.5 878.99,405.9 879.11,392.3 879.23,390.7 879.34,388.5 879.46,391.6 879.58,402.2 879.70,395.8 879.81,437.0 879.93,395.7 880.05,385.9 880.16,394.9 880.28,393.0 880.40,388.8 880.51,389.9 880.63,393.2 880.75,391.3 880.86,413.8 880.98,397.2 881.09,387.3 881.21,388.5 881.32,405.4 881.44,389.2 881.55,388.1 881.67,394.5 881.79,398.4 881.90,381.3 882.02,387.9 882.13,411.0 882.24,392.9 882.36,397.5 882.47,391.1 882.59,387.9 882.70,400.2 882.82,400.1 882.93,387.3 883.04,398.8 883.16,391.7 883.27,392.8 883.39,398.6 883.50,390.8 883.61,398.3 883.73,414.1 883.84,391.7 883.95,397.5 884.06,388.6 884.18,385.6 884.29,385.1 884.40,394.5 884.52,389.5 884.63,407.2 884.74,391.4 884.85,401.3 884.96,390.3 885.08,397.2 885.19,395.0 885.30,392.2 885.41,394.9 885.52,393.6 885.63,385.4 885.75,414.3 885.86,402.3 885.97,397.4 886.08,393.0 886.19,389.6 886.30,402.1 886.41,406.4 886.52,393.6 886.63,396.9 886.74,398.1 886.85,393.1 886.96,407.2 887.07,389.0 887.18,392.6 887.29,395.8 887.40,390.7 887.51,397.1 887.62,401.4 887.73,396.2 887.84,401.1 887.95,397.7 888.06,389.1 888.17,397.4 888.28,395.7 888.39,400.2 888.50,408.8 888.61,396.1 888.71,398.7 888.82,397.9 888.93,398.5 889.04,388.7 889.15,390.5 889.26,397.2 889.36,401.7 889.47,398.4 889.58,396.5 889.69,413.4 889.80,393.4 889.90,388.2 890.01,402.8 890.12,399.7 890.23,398.1 890.33,400.9 890.44,404.2 890.55,398.5 890.65,396.6 890.76,391.4 890.87,399.0 890.97,399.6 891.08,398.2 891.19,388.9 891.29,422.3 891.40,405.0 891.51,404.9 891.61,399.4 891.72,392.7 891.82,394.0 891.93,414.2 892.04,393.6 892.14,405.0 892.25,398.7 892.35,398.7 892.46,395.2 892.56,402.3 892.67,390.8 892.77,393.5 892.88,395.2 892.98,399.2 893.09,391.0 893.19,392.4 893.30,396.4 893.40,399.6 893.51,402.3 893.61,400.5 893.71,397.4 893.82,392.2 893.92,392.7 894.03,386.3 894.13,385.8 894.23,398.9 894.34,389.8 894.44,398.0 894.54,399.4 894.65,398.0 894.75,400.4 894.85,401.2 894.96,398.5 895.06,389.6 895.16,414.1 895.27,392.9 895.37,394.2 895.47,388.9 895.57,395.9 895.68,394.7 895.78,392.3 895.88,394.0 895.98,396.1 896.09,389.3 896.19,397.7 896.29,390.6 896.39,396.4 896.49,406.2 896.60,393.6 896.70,401.5 896.80,391.1 896.90,385.1 897.00,387.5 897.10,388.6 897.20,383.8 897.31,410.0 897.41,386.5 897.51,389.5 897.61,404.3 897.71,408.9 897.81,389.9 897.91,395.2 898.01,401.8 898.11,395.4 898.21,390.5 898.31,387.7 898.41,396.0 898.51,389.9 898.61,393.1 898.71,397.3 898.81,388.8 898.91,390.7 899.01,393.3 899.11,399.7 899.21,392.6 899.31,405.6 899.41,413.7 899.51,400.9 899.61,396.0 899.71,393.7 899.81,387.2 899.91,393.2 900.01,398.8 900.10,406.7 900.20,399.4 900.30,397.9 900.40,388.2 900.50,395.0 900.60,387.1 900.70,391.1 900.79,406.7 900.89,400.7 900.99,397.1 901.09,393.5 901.19,390.0 901.28,382.8 901.38,398.5 901.48,386.7 901.58,382.4 901.67,386.7 901.77,391.0 901.87,396.4 901.97,394.4 902.06,401.0 902.16,396.2 902.26,399.5 902.36,405.9 902.45,393.1 902.55,390.7 902.65,403.4 902.74,392.7 902.84,395.3 902.94,395.5 903.03,388.8 903.13,391.5 903.22,384.5 903.32,388.6 903.42,392.1 903.51,388.7 903.61,407.8 903.71,405.6 903.80,388.3 903.90,399.0 903.99,398.3 904.09,409.3 904.18,386.5 904.28,384.3 904.37,398.4 904.47,389.5 904.56,388.1 904.66,397.0 904.76,394.8 904.85,397.1 904.95,388.2 905.04,389.8 905.13,396.0 905.23,389.9 905.32,392.3 905.42,390.6 905.51,388.8 905.61,389.0 905.70,406.2 905.80,383.2 905.89,383.1 905.98,388.5 906.08,403.7 906.17,387.4 906.27,398.0 906.36,395.5 906.45,391.4 906.55,397.1 906.64,393.6 906.73,389.5 906.83,392.5 906.92,387.7 907.01,387.8 907.11,383.0 907.20,394.8 907.29,388.8 907.39,396.1 907.48,387.9 907.57,398.0 907.67,390.7 907.76,401.8 907.85,388.6 907.94,397.1 908.04,390.6 908.13,425.9 908.22,394.8 908.31,392.8 908.41,389.2 908.50,385.5 908.59,385.2 908.68,394.1 908.77,388.1 908.87,394.2 908.96,388.8 909.05,394.2 909.14,401.5 909.23,404.8 909.32,396.4 909.42,387.4 909.51,391.5 909.60,385.1 909.69,387.9 909.78,388.4 909.87,388.9 909.96,401.5 910.05,381.7 910.14,393.6 910.24,411.2 910.33,397.8 910.42,394.4 910.51,393.7 910.60,396.1 910.69,387.9 910.78,396.9 910.87,398.0 910.96,395.5 911.05,387.6 911.14,385.1 911.23,404.9 911.32,386.0 911.41,394.3 911.50,394.3 911.59,386.2 911.68,386.3 911.77,388.3 911.86,397.4 911.95,393.8 912.04,391.7 912.13,387.7 912.22,412.5 912.31,400.3 912.40,390.9 912.48,392.6 912.57,391.1 912.66,404.0 912.75,396.4 912.84,397.5 912.93,387.1 913.02,384.1 913.11,388.3 913.20,395.1 913.28,385.5 913.37,389.9 913.46,395.0 913.55,391.9 913.64,391.7 913.73,389.1 913.81,389.5 913.90,431.4 913.99,395.8 914.08,388.7 914.17,394.3 914.25,396.1 914.34,402.5 914.43,393.8 914.52,391.6 914.60,388.2 914.69,404.3 914.78,392.9 914.87,396.4 914.95,406.7 915.04,389.9 915.13,382.6 915.22,418.1 915.30,403.9 915.39,414.8 915.48,388.5 915.56,388.6 915.65,386.5 915.74,399.1 915.82,390.2 915.91,399.2 916.00,388.3 916.08,379.9 916.17,411.7 916.26,390.6 916.34,386.4 916.43,390.4 916.52,389.6 916.60,388.4 916.69,384.0 916.77,397.3 916.86,384.8 916.95,420.9 917.03,393.5 917.12,391.8 917.20,385.2 917.29,385.8 917.37,398.8 917.46,389.7 917.55,388.9 917.63,390.0 917.72,408.8 917.80,382.7 917.89,394.1 917.97,386.0 918.06,386.6 918.14,400.1 918.23,418.1 918.31,388.2 918.40,388.8 918.48,396.0 918.57,387.8 918.65,416.6 918.74,391.1 918.82,384.5 918.91,385.0 918.99,382.1 919.07,383.6 919.16,395.5 919.24,390.9 919.33,394.2 919.41,402.4 919.50,388.3 919.58,384.4 919.66,388.5 919.75,402.1 919.83,385.7 919.91,384.4 920.00,398.5 920.08,391.7 920.17,399.8 920.25,407.5 920.33,405.8 920.42,387.5 920.50,410.6 920.58,380.4 920.67,395.0 920.75,392.2 920.83,399.7 920.92,391.4 921.00,383.5 921.08,398.8 921.16,388.7 921.25,396.7 921.33,396.2 921.41,392.2 921.50,389.9 921.58,401.5 921.66,421.3 921.74,396.7 921.83,382.9 921.91,389.0 921.99,396.9 922.07,391.2 922.16,398.1 922.24,388.0 922.32,403.9 922.40,395.7 922.48,392.6 922.57,382.2 922.65,396.3 922.73,395.7 922.81,396.6 922.89,394.4 922.98,383.5 923.06,395.9 923.14,394.2 923.22,381.4 923.30,382.6 923.38,418.1 923.46,393.8 923.55,390.8 923.63,387.7 923.71,401.7 923.79,395.5 923.87,385.6 923.95,383.8 924.03,411.2 924.11,384.2 924.19,398.0 924.28,394.2 924.36,403.4 924.44,394.1 924.52,398.9 924.60,398.7 924.68,397.6 924.76,404.8 924.84,398.2 924.92,401.7 925.00,397.4 925.08,386.1 925.16,406.1 925.24,398.0 925.32,405.2 925.40,391.7 925.48,398.7 925.56,392.9 925.64,390.9 925.72,390.1 925.80,387.1 925.88,394.3 925.96,382.5 926.04,412.8 926.12,403.3 926.20,394.1 926.28,403.2 926.36,397.1 926.44,389.3 926.52,386.9 926.60,392.9 926.67,396.3 926.75,380.6 926.83,387.9 926.91,392.8 926.99,392.2 927.07,396.1 927.15,394.4 927.23,391.0 927.31,385.8 927.39,385.1 927.46,403.2 927.54,405.4 927.62,383.5 927.70,393.4 927.78,384.2 927.86,397.4 927.94,389.8 928.01,392.5 928.09,400.1 928.17,399.8 928.25,404.3 928.33,439.7 928.40,386.2 928.48,396.2 928.56,383.3 928.64,388.3 928.72,386.6 928.79,401.3 928.87,393.4 928.95,404.7 929.03,396.7 929.11,392.8 929.18,388.6 929.26,387.2 929.34,397.1 929.42,390.8 929.49,392.6 929.57,394.1 929.65,386.4 929.72,386.3 929.80,391.4 929.88,397.1 929.96,387.6 930.03,388.2 930.11,395.6 930.19,390.8 930.26,390.5 930.34,396.7 930.42,378.9 930.49,388.2 930.57,394.1 930.65,392.3 930.72,398.2 930.80,391.4 930.88,388.4 930.95,393.1 931.03,385.9 931.11,399.3 931.18,396.4 931.26,385.6 931.34,391.5 931.41,404.8 931.49,396.4 931.56,396.2 931.64,403.8 931.72,388.6 931.79,390.7 931.87,385.1 931.94,388.3 932.02,388.0 932.09,395.0 932.17,398.9 932.25,392.1 932.32,382.7 932.40,391.0 932.47,382.3 932.55,387.9 932.62,389.8 932.70,387.5 932.77,396.6 932.85,402.7 932.92,389.0 933.00,386.3" fill="none" stroke="#00ffff" stroke-width="0.8" stroke-linejoin="miter"/><circle cx="46.5" cy="385.4" r="1.6" fill="none" stroke="#ffff00" stroke-width="1"/><circle cx="933" cy="386.3" r="1.3" fill="#00ff00"/><polyline points="46.00,534.7 129.33,541.0 178.08,538.5 212.67,536.5 239.50,539.0 261.42,540.2 279.95,537.8 296.00,510.7 310.16,530.2 322.83,535.5 334.29,540.9 344.75,530.9 354.37,543.6 363.28,541.8 371.58,546.0 379.34,533.2 386.63,527.4 393.50,544.8 400.00,536.3 406.17,546.0 412.03,536.3 417.62,529.6 422.97,533.0 428.09,542.6 432.99,524.8 437.71,535.5 442.25,528.6 446.62,528.9 450.84,542.3 454.91,541.2 458.86,520.7 462.67,536.4 466.37,520.4 469.96,525.5 473.45,531.6 476.83,498.8 480.13,485.8 483.33,515.9 486.46,509.0 489.50,529.6 492.47,507.7 495.37,508.4 498.19,526.2 500.96,530.3 503.66,539.9 506.30,513.8 508.89,506.3 511.42,522.0 514.00,522.7 516.50,550.6 516.80,565.4 519.00,532.6 522.30,528.4 525.50,535.0 528.00,520.2 530.50,526.8 532.10,519.4 534.60,549.0 536.60,524.3 538.70,549.8 540.30,492.3 543.60,501.3 546.40,486.5 548.60,501.3 551.90,500.5 554.30,510.4 557.30,503.8 561.70,526.8 564.20,516.1 567.10,514.5 568.80,529.3 570.80,505.4 573.20,536.7 574.90,512.0 576.50,534.2 578.20,508.7 581.40,513.6 585.60,506.3 588.80,498.0 590.50,511.2 593.80,499.7 596.20,526.0 600.30,492.3 602.00,503.0 605.30,485.7 609.40,507.9 614.30,481.6 618.40,475.8 620.10,498.0 624.20,482.4 625.52,506.2 626.49,481.7 627.45,482.0 628.40,501.0 629.34,488.2 630.28,519.8 631.21,504.9 632.13,486.1 633.04,485.2 633.95,501.5 634.85,486.1 635.74,497.9 636.63,495.9 637.51,490.0 638.39,519.9 639.25,495.8 640.11,502.6 640.97,525.3 641.82,475.8 642.66,500.0 643.50,482.6 644.33,475.6 645.16,475.2 645.98,476.1 646.80,470.4 647.61,480.5 648.41,483.7 649.21,470.2 650.00,502.6 650.79,486.1 651.57,483.0 652.35,473.5 653.13,491.3 653.89,482.2 654.66,497.9 655.42,477.1 656.17,495.6 656.92,493.3 657.66,480.7 658.40,480.3 659.14,489.2 659.87,499.2 660.59,501.7 661.32,486.1 662.03,476.0 662.75,488.6 663.46,494.9 664.16,494.2 664.86,475.4 665.56,490.9 666.25,484.2 666.94,488.7 667.63,489.9 668.31,476.8 668.99,472.5 669.66,467.5 670.33,472.8 671.00,475.3 671.66,479.2 672.32,503.1 672.97,489.0 673.62,483.3 674.27,482.6 674.92,486.6 675.56,484.5 676.20,484.3 676.83,485.6 677.46,484.5 678.09,479.8 678.71,477.5 679.33,485.8 679.95,476.2 680.57,472.0 681.18,480.2 681.79,482.9 682.39,505.6 683.00,488.0 683.60,488.2 684.19,485.2 684.79,491.5 685.38,497.6 685.97,487.6 686.55,498.1 687.13,495.4 687.71,489.7 688.29,494.8 688.86,506.8 689.43,492.3 690.00,497.9 690.57,494.6 691.13,506.0 691.69,493.3 692.25,504.6 692.80,486.9 693.36,518.6 693.91,504.9 694.46,503.8 695.00,505.5 695.54,491.9 696.08,496.2 696.62,493.3 697.16,506.4 697.69,488.5 698.22,504.5 698.75,514.1 699.28,493.9 699.80,492.0 700.32,486.3 700.84,507.4 701.36,500.6 701.87,499.7 702.39,511.2 702.90,523.1 703.40,505.2 703.91,511.1 704.41,503.0 704.92,513.1 705.42,506.8 705.91,509.5 706.41,516.3 706.90,497.2 707.40,515.2 707.89,511.4 708.37,510.5 708.86,495.4 709.34,504.7 709.82,501.1 710.30,516.8 710.78,518.5 711.26,499.6 711.73,531.0 712.21,502.3 712.68,503.5 713.14,502.1 713.61,513.0 714.08,512.6 714.54,520.2 715.00,517.2 715.46,522.4 715.92,529.7 716.38,519.3 716.83,527.4 717.28,513.4 717.73,554.4 718.18,513.5 718.63,526.3 719.08,515.0 719.52,508.6 719.96,524.5 720.41,516.9 720.85,508.9 721.28,503.4 721.72,511.5 722.15,509.9 722.59,516.3 723.02,510.5 723.45,525.9 723.88,506.2 724.31,512.8 724.73,511.4 725.15,508.8 725.58,512.5 726.00,508.5 726.42,517.2 726.84,507.9 727.25,514.6 727.67,522.3 728.08,510.7 728.49,508.3 728.91,508.0 729.32,511.6 729.72,508.7 730.13,515.6 730.54,517.5 730.94,510.9 731.34,531.0 731.74,516.2 732.14,527.2 732.54,501.3 732.94,508.5 733.34,501.1 733.73,503.0 734.12,498.9 734.52,503.5 734.91,495.9 735.30,500.9 735.69,500.8 736.07,511.4 736.46,505.1 736.84,505.2 737.23,507.0 737.61,494.0 737.99,493.0 738.37,483.5 738.75,509.6 739.13,506.9 739.50,498.4 739.88,492.2 740.25,488.7 740.63,495.4 741.00,493.0 741.37,503.3 741.74,501.8 742.10,492.3 742.47,501.4 742.84,491.0 743.20,486.9 743.57,491.0 743.93,481.7 744.29,485.8 744.65,477.5 745.01,481.4 745.37,475.3 745.73,480.2 746.08,482.2 746.44,481.2 746.79,485.5 747.15,481.9 747.50,475.5 747.85,493.1 748.20,484.0 748.55,488.2 748.90,498.9 749.24,502.1 749.59,498.8 749.93,484.1 750.28,491.4 750.62,489.4 750.96,495.6 751.30,505.3 751.64,507.6 751.98,495.9 752.32,510.7 752.66,486.7 752.99,495.2 753.33,509.8 753.66,497.9 754.00,496.4 754.33,505.7 754.66,495.8 754.99,506.3 755.32,539.5 755.65,503.1 755.98,502.7 756.31,517.3 756.63,495.4 756.96,514.4 757.28,500.4 757.61,503.5 757.93,512.5 758.25,509.4 758.57,506.3 758.89,510.3 759.21,510.9 759.53,488.1 759.85,502.1 760.16,522.5 760.48,493.6 760.80,509.3 761.11,498.4 761.42,499.4 761.74,497.8 762.05,506.8 762.36,493.3 762.67,498.5 762.98,509.5 763.29,510.2 763.60,509.2 763.90,505.4 764.21,490.7 764.51,494.5 764.82,517.4 765.12,498.9 765.43,497.0 765.73,498.2 766.03,494.0 766.33,498.2 766.63,492.1 766.93,503.5 767.23,491.2 767.53,525.2 767.82,497.8 768.12,499.7 768.42,510.6 768.71,497.3 769.01,505.7 769.30,495.6 769.59,490.1 769.88,494.1 770.18,481.5 770.47,524.2 770.76,487.7 771.05,498.6 771.34,488.3 771.62,485.4 771.91,504.0 772.20,490.3 772.48,497.0 772.77,486.1 773.05,498.1 773.34,485.2 773.62,506.9 773.90,486.0 774.18,490.0 774.47,479.8 774.75,479.4 775.03,499.6 775.31,487.9 775.58,481.8 775.86,491.8 776.14,501.0 776.42,490.3 776.69,485.4 776.97,501.7 777.24,484.7 777.52,480.8 777.79,484.1 778.06,487.4 778.34,485.0 778.61,477.9 778.88,493.4 779.15,501.2 779.42,504.0 779.69,511.6 779.96,499.7 780.22,493.9 780.49,498.3 780.76,494.4 781.02,496.0 781.29,490.3 781.56,503.3 781.82,478.4 782.08,489.6 782.35,484.9 782.61,525.3 782.87,492.8 783.13,501.0 783.40,504.3 783.66,494.4 783.92,518.1 784.18,502.7 784.43,546.8 784.69,489.1 784.95,505.0 785.21,501.4 785.46,485.2 785.72,504.0 785.98,502.0 786.23,512.9 786.48,486.2 786.74,498.8 786.99,489.0 787.24,511.6 787.50,520.0 787.75,499.4 788.00,518.0 788.25,503.3 788.50,502.2 788.75,503.5 789.00,501.6 789.25,516.5 789.50,519.1 789.74,523.0 789.99,498.8 790.24,513.3 790.48,537.4 790.73,509.5 790.97,517.0 791.22,498.0 791.46,511.2 791.71,510.3 791.95,521.4 792.19,531.0 792.44,527.7 792.68,527.7 792.92,529.2 793.16,519.3 793.40,509.1 793.64,506.5 793.88,517.7 794.12,508.6 794.36,528.8 794.59,523.9 794.83,515.6 795.07,519.3 795.30,517.3 795.54,524.5 795.78,542.4 796.01,492.7 796.24,535.7 796.48,523.7 796.71,512.0 796.95,503.7 797.18,505.8 797.41,502.5 797.64,509.4 797.87,512.1 798.11,509.0 798.34,529.6 798.57,512.3 798.80,513.2 799.02,517.8 799.25,521.8 799.48,504.9 799.71,522.3 799.94,525.9 800.16,512.9 800.39,519.3 800.62,514.0 800.84,507.3 801.07,502.6 801.29,530.4 801.52,523.0 801.74,515.5 801.97,531.7 802.19,523.2 802.41,496.8 802.63,508.4 802.86,497.3 803.08,522.9 803.30,499.5 803.52,503.2 803.74,499.4 803.96,514.1 804.18,515.2 804.40,505.3 804.62,499.9 804.84,504.9 805.05,514.4 805.27,504.4 805.49,520.7 805.71,487.4 805.92,501.2 806.14,521.7 806.35,499.6 806.57,531.7 806.78,507.8 807.00,505.6 807.21,514.5 807.43,490.6 807.64,490.3 807.85,518.3 808.07,498.8 808.28,506.7 808.49,498.4 808.70,498.6 808.91,490.1 809.12,509.3 809.33,504.9 809.54,500.6 809.75,498.9 809.96,515.6 810.17,505.0 810.38,531.0 810.59,503.2 810.80,502.1 811.00,495.3 811.21,486.3 811.42,495.8 811.62,523.8 811.83,525.3 812.03,496.2 812.24,501.5 812.45,495.3 812.65,496.7 812.85,508.6 813.06,500.1 813.26,565.7 813.46,499.3 813.67,505.6 813.87,512.0 814.07,501.3 814.27,487.3 814.48,490.0 814.68,495.1 814.88,503.7 815.08,523.6 815.28,514.7 815.48,514.9 815.68,503.5 815.88,513.6 816.08,509.0 816.27,500.8 816.47,502.0 816.67,509.9 816.87,488.8 817.07,498.9 817.26,509.8 817.46,509.6 817.66,496.7 817.85,501.5 818.05,502.5 818.24,499.9 818.44,501.8 818.63,489.9 818.83,511.8 819.02,503.1 819.21,492.6 819.41,513.5 819.60,507.5 819.79,490.7 819.99,499.0 820.18,509.1 820.37,492.9 820.56,502.8 820.75,493.9 820.94,498.6 821.14,508.9 821.33,497.6 821.52,506.2 821.71,495.0 821.89,494.5 822.08,500.3 822.27,500.1 822.46,508.9 822.65,519.5 822.84,500.3 823.03,505.3 823.21,493.6 823.40,511.0 823.59,498.8 823.77,503.0 823.96,519.5 824.15,520.9 824.33,512.6 824.52,507.2 824.70,507.9 824.89,516.9 825.07,503.8 825.26,494.6 825.44,494.1 825.62,500.4 825.81,506.3 825.99,493.4 826.17,522.6 826.36,492.8 826.54,501.3 826.72,507.1 826.90,502.9 827.08,506.3 827.26,500.1 827.44,513.9 827.63,508.9 827.81,512.7 827.99,500.8 828.17,526.6 828.35,506.2 828.52,502.1 828.70,492.8 828.88,491.7 829.06,527.2 829.24,501.3 829.42,513.1 829.59,494.0 829.77,490.1 829.95,503.3 830.13,490.1 830.30,496.6 830.48,528.4 830.66,496.3 830.83,501.8 831.01,505.1 831.18,494.1 831.36,492.7 831.53,515.7 831.71,507.1 831.88,494.2 832.06,502.5 832.23,504.9 832.40,494.3 832.58,496.1 832.75,489.9 832.92,497.7 833.10,489.8 833.27,492.8 833.44,492.0 833.61,499.5 833.78,491.0 833.95,508.2 834.13,486.9 834.30,499.4 834.47,486.7 834.64,497.1 834.81,506.2 834.98,499.7 835.15,492.3 835.32,504.6 835.49,528.9 835.66,508.3 835.82,509.8 835.99,502.1 836.16,500.1 836.33,506.5 836.50,501.1 836.66,508.0 836.83,503.9 837.00,505.1 837.17,513.7 837.33,500.0 837.50,498.6 837.66,492.7 837.83,500.5 838.00,523.2 838.16,520.0 838.33,516.1 838.49,526.4 838.66,505.0 838.82,503.5 838.99,508.5 839.15,497.5 839.31,503.2 839.48,496.1 839.64,509.0 839.80,495.9 839.97,504.2 840.13,497.2 840.29,512.3 840.45,502.7 840.62,522.0 840.78,509.4 840.94,524.0 841.10,521.3 841.26,501.3 841.42,503.1 841.59,500.5 841.75,507.1 841.91,516.5 842.07,516.5 842.23,514.2 842.39,507.5 842.55,513.0 842.71,500.4 842.86,506.3 843.02,501.5 843.18,508.0 843.34,506.4 843.50,550.2 843.66,496.7 843.81,498.3 843.97,504.0 844.13,507.6 844.29,510.1 844.44,494.9 844.60,505.4 844.76,516.0 844.91,504.0 845.07,518.2 845.23,501.5 845.38,505.7 845.54,528.3 845.69,520.6 845.85,496.3 846.00,507.8 846.16,496.1 846.31,513.5 846.47,502.3 846.62,524.5 846.78,501.5 846.93,501.7 847.08,509.5 847.24,508.8 847.39,519.7 847.54,498.7 847.70,496.4 847.85,510.8 848.00,495.7 848.15,520.9 848.31,503.7 848.46,520.5 848.61,496.4 848.76,500.5 848.91,495.5 849.06,498.3 849.21,514.6 849.36,503.9 849.52,513.1 849.67,502.1 849.82,506.6 849.97,499.0 850.12,503.5 850.27,518.4 850.41,506.3 850.56,531.1 850.71,499.0 850.86,501.9 851.01,516.4 851.16,509.8 851.31,500.5 851.46,495.6 851.60,505.6 851.75,498.0 851.90,503.3 852.05,519.7 852.19,503.1 852.34,502.6 852.49,504.6 852.63,507.1 852.78,497.2 852.93,509.1 853.07,509.3 853.22,509.9 853.37,506.8 853.51,494.4 853.66,539.6 853.80,521.3 853.95,510.2 854.09,508.5 854.24,504.5 854.38,498.6 854.53,494.7 854.67,495.3 854.81,503.5 854.96,524.8 855.10,511.8 855.24,494.1 855.39,499.3 855.53,508.3 855.67,500.8 855.82,498.7 855.96,540.8 856.10,504.0 856.24,506.9 856.39,493.4 856.53,500.6 856.67,509.0 856.81,510.5 856.95,501.8 857.10,505.8 857.24,536.9 857.38,516.9 857.52,513.2 857.66,516.7 857.80,500.7 857.94,517.5 858.08,505.5 858.22,510.2 858.36,514.8 858.50,523.9 858.64,495.4 858.78,499.3 858.92,512.0 859.06,493.1 859.20,503.0 859.34,496.7 859.47,503.5 859.61,540.7 859.75,503.0 859.89,499.0 860.03,494.2 860.16,505.9 860.30,508.8 860.44,504.6 860.58,508.7 860.71,518.5 860.85,537.1 860.99,497.5 861.12,517.9 861.26,514.8 861.40,521.9 861.53,498.7 861.67,510.4 861.81,517.2 861.94,506.7 862.08,530.4 862.21,514.9 862.35,517.1 862.48,513.7 862.62,512.8 862.75,511.4 862.89,538.3 863.02,505.8 863.16,534.7 863.29,509.2 863.42,536.8 863.56,511.3 863.69,502.9 863.83,512.5 863.96,508.8 864.09,530.2 864.23,514.2 864.36,515.6 864.49,503.9 864.62,510.1 864.76,517.5 864.89,507.1 865.02,509.8 865.15,505.1 865.29,504.4 865.42,523.3 865.55,512.7 865.68,496.6 865.81,521.3 865.94,508.8 866.08,504.8 866.21,525.3 866.34,506.6 866.47,527.4 866.60,508.0 866.73,535.9 866.86,551.0 866.99,534.3 867.12,529.8 867.25,511.7 867.38,521.8 867.51,526.1 867.64,522.5 867.77,559.4 867.90,517.4 868.03,505.6 868.16,540.8 868.28,541.8 868.41,510.0 868.54,512.3 868.67,546.7 868.80,542.4 868.93,519.0 869.05,514.4 869.18,511.3 869.31,504.0 869.44,504.0 869.56,521.3 869.69,547.6 869.82,526.5 869.95,511.7 870.07,534.9 870.20,527.3 870.33,523.0 870.45,531.5 870.58,519.6 870.71,514.4 870.83,508.6 870.96,507.7 871.08,498.1 871.21,523.0 871.33,502.1 871.46,518.6 871.59,512.3 871.71,525.6 871.84,525.1 871.96,514.1 872.09,517.0 872.21,515.9 872.33,527.2 872.46,513.9 872.58,516.8 872.71,516.6 872.83,519.4 872.96,525.3 873.08,517.1 873.20,515.3 873.33,516.7 873.45,516.9 873.57,515.9 873.70,527.7 873.82,510.1 873.94,536.6 874.06,531.4 874.19,538.8 874.31,513.1 874.43,536.6 874.55,515.7 874.68,547.5 874.80,522.0 874.92,513.7 875.04,536.7 875.16,508.7 875.28,546.8 875.41,551.0 875.53,512.3 875.65,524.1 875.77,517.8 875.89,537.3 876.01,528.7 876.13,519.9 876.25,547.4 876.37,517.6 876.49,534.1 876.61,516.7 876.73,520.4 876.85,537.7 876.97,562.4 877.09,516.4 877.21,546.4 877.33,510.6 877.45,504.6 877.57,517.2 877.69,535.9 877.81,517.2 877.93,530.3 878.05,551.3 878.16,555.6 878.28,513.2 878.40,521.1 878.52,507.0 878.64,529.5 878.76,507.1 878.87,553.3 878.99,519.9 879.11,538.9 879.23,540.3 879.34,518.0 879.46,515.3 879.58,523.0 879.70,516.8 879.81,518.6 879.93,540.1 880.05,536.4 880.16,535.0 880.28,513.8 880.40,521.1 880.51,537.4 880.63,533.1 880.75,516.5 880.86,513.1 880.98,511.6 881.09,522.4 881.21,518.2 881.32,512.3 881.44,508.4 881.55,521.4 881.67,518.0 881.79,511.0 881.90,516.0 882.02,530.0 882.13,519.4 882.24,522.3 882.36,522.2 882.47,517.7 882.59,519.2 882.70,514.6 882.82,506.6 882.93,504.1 883.04,529.5 883.16,514.6 883.27,512.3 883.39,509.7 883.50,510.5 883.61,511.1 883.73,526.7 883.84,526.3 883.95,515.2 884.06,520.1 884.18,510.2 884.29,499.2 884.40,511.6 884.52,507.9 884.63,540.2 884.74,523.1 884.85,510.4 884.96,535.9 885.08,526.3 885.19,525.8 885.30,516.1 885.41,523.1 885.52,529.5 885.63,517.8 885.75,518.1 885.86,527.7 885.97,517.0 886.08,506.0 886.19,531.2 886.30,509.5 886.41,521.1 886.52,508.0 886.63,514.7 886.74,544.2 886.85,511.7 886.96,508.9 887.07,518.3 887.18,562.5 887.29,512.2 887.40,513.2 887.51,548.7 887.62,529.6 887.73,545.1 887.84,520.0 887.95,516.9 888.06,518.5 888.17,532.3 888.28,518.7 888.39,541.8 888.50,523.6 888.61,505.6 888.71,533.0 888.82,518.6 888.93,533.0 889.04,512.0 889.15,510.9 889.26,516.9 889.36,522.4 889.47,523.5 889.58,516.2 889.69,533.3 889.80,540.3 889.90,570.0 890.01,514.9 890.12,514.3 890.23,512.9 890.33,506.2 890.44,518.7 890.55,517.8 890.65,513.2 890.76,538.0 890.87,509.9 890.97,511.3 891.08,529.0 891.19,521.7 891.29,514.1 891.40,540.0 891.51,542.9 891.61,529.6 891.72,533.8 891.82,513.5 891.93,516.8 892.04,529.0 892.14,518.6 892.25,516.4 892.35,516.6 892.46,512.0 892.56,541.7 892.67,526.2 892.77,517.7 892.88,517.4 892.98,570.0 893.09,532.9 893.19,518.8 893.30,530.2 893.40,535.1 893.51,527.7 893.61,531.1 893.71,543.1 893.82,536.0 893.92,530.4 894.03,552.5 894.13,524.5 894.23,516.4 894.34,523.2 894.44,526.4 894.54,527.6 894.65,508.6 894.75,528.9 894.85,533.2 894.96,540.4 895.06,521.3 895.16,538.1 895.27,540.3 895.37,513.5 895.47,510.3 895.57,526.4 895.68,532.5 895.78,512.3 895.88,519.4 895.98,515.1 896.09,549.2 896.19,531.1 896.29,532.1 896.39,517.1 896.49,527.3 896.60,518.7 896.70,517.2 896.80,513.0 896.90,519.1 897.00,512.5 897.10,531.0 897.20,523.1 897.31,520.2 897.41,543.0 897.51,527.0 897.61,513.4 897.71,518.8 897.81,535.2 897.91,531.8 898.01,513.9 898.11,517.1 898.21,516.4 898.31,540.8 898.41,508.9 898.51,516.1 898.61,518.1 898.71,536.3 898.81,527.3 898.91,528.1 899.01,529.1 899.11,529.4 899.21,525.4 899.31,521.7 899.41,515.2 899.51,518.5 899.61,548.4 899.71,528.1 899.81,531.1 899.91,524.1 900.01,524.0 900.10,513.8 900.20,511.4 900.30,514.1 900.40,540.9 900.50,531.1 900.60,540.0 900.70,524.5 900.79,520.4 900.89,513.2 900.99,538.2 901.09,514.3 901.19,527.7 901.28,528.3 901.38,526.7 901.48,534.3 901.58,530.5 901.67,567.1 901.77,525.1 901.87,518.7 901.97,536.5 902.06,528.1 902.16,517.5 902.26,517.1 902.36,523.8 902.45,511.1 902.55,519.1 902.65,515.7 902.74,527.8 902.84,529.8 902.94,523.6 903.03,534.5 903.13,518.0 903.22,515.3 903.32,525.5 903.42,519.6 903.51,513.4 903.61,522.3 903.71,525.2 903.80,560.7 903.90,537.4 903.99,520.6 904.09,521.8 904.18,532.4 904.28,527.1 904.37,564.3 904.47,521.9 904.56,519.9 904.66,557.9 904.76,527.8 904.85,524.7 904.95,516.9 905.04,519.6 905.13,526.8 905.23,521.4 905.32,526.0 905.42,527.2 905.51,527.6 905.61,530.0 905.70,523.7 905.80,523.1 905.89,519.0 905.98,555.3 906.08,529.5 906.17,526.2 906.27,532.2 906.36,538.7 906.45,513.4 906.55,512.9 906.64,505.1 906.73,540.8 906.83,514.2 906.92,524.5 907.01,534.7 907.11,518.9 907.20,525.2 907.29,543.9 907.39,532.4 907.48,531.0 907.57,520.4 907.67,544.1 907.76,522.5 907.85,545.6 907.94,526.8 908.04,524.4 908.13,525.8 908.22,524.9 908.31,520.9 908.41,518.3 908.50,529.5 908.59,520.3 908.68,535.5 908.77,515.6 908.87,523.6 908.96,521.0 909.05,517.5 909.14,512.6 909.23,524.1 909.32,515.9 909.42,520.9 909.51,521.6 909.60,529.1 909.69,519.0 909.78,537.4 909.87,506.0 909.96,532.6 910.05,553.1 910.14,533.6 910.24,528.0 910.33,535.9 910.42,526.3 910.51,530.4 910.60,526.0 910.69,514.1 910.78,514.2 910.87,521.4 910.96,519.3 911.05,522.3 911.14,520.9 911.23,533.0 911.32,512.9 911.41,553.8 911.50,510.8 911.59,525.2 911.68,550.0 911.77,528.4 911.86,525.3 911.95,540.5 912.04,517.2 912.13,533.7 912.22,525.2 912.31,529.6 912.40,526.0 912.48,549.9 912.57,521.5 912.66,550.2 912.75,542.5 912.84,526.2 912.93,514.7 913.02,522.1 913.11,531.9 913.20,524.0 913.28,529.3 913.37,527.4 913.46,539.1 913.55,526.0 913.64,544.8 913.73,518.2 913.81,548.1 913.90,513.9 913.99,515.7 914.08,520.9 914.17,528.3 914.25,530.0 914.34,527.5 914.43,543.1 914.52,520.6 914.60,521.8 914.69,513.2 914.78,532.3 914.87,538.5 914.95,523.4 915.04,509.1 915.13,519.2 915.22,541.7 915.30,514.9 915.39,525.0 915.48,505.3 915.56,516.1 915.65,508.6 915.74,531.3 915.82,513.9 915.91,514.0 916.00,541.5 916.08,528.8 916.17,542.4 916.26,540.6 916.34,523.7 916.43,544.8 916.52,518.3 916.60,529.5 916.69,511.1 916.77,541.1 916.86,543.5 916.95,522.4 917.03,524.3 917.12,533.3 917.20,519.6 917.29,517.9 917.37,534.5 917.46,529.7 917.55,532.6 917.63,518.0 917.72,520.1 917.80,530.9 917.89,515.7 917.97,529.8 918.06,512.5 918.14,517.5 918.23,516.1 918.31,525.2 918.40,516.7 918.48,531.8 918.57,535.0 918.65,507.9 918.74,527.7 918.82,514.5 918.91,535.1 918.99,532.4 919.07,512.7 919.16,524.2 919.24,523.1 919.33,535.8 919.41,534.5 919.50,516.1 919.58,526.7 919.66,542.4 919.75,536.8 919.83,542.6 919.91,523.5 920.00,544.0 920.08,528.1 920.17,524.1 920.25,529.1 920.33,530.2 920.42,523.9 920.50,526.8 920.58,541.1 920.67,518.4 920.75,553.7 920.83,534.3 920.92,523.8 921.00,514.4 921.08,524.4 921.16,535.3 921.25,532.4 921.33,516.9 921.41,543.5 921.50,511.9 921.58,544.4 921.66,537.2 921.74,511.3 921.83,537.3 921.91,527.0 921.99,526.5 922.07,536.6 922.16,532.4 922.24,542.8 922.32,514.6 922.40,522.9 922.48,524.5 922.57,549.0 922.65,515.0 922.73,535.0 922.81,532.9 922.89,521.9 922.98,530.4 923.06,547.2 923.14,551.5 923.22,533.9 923.30,523.3 923.38,532.3 923.46,539.4 923.55,518.5 923.63,541.0 923.71,546.4 923.79,525.9 923.87,531.6 923.95,531.1 924.03,534.3 924.11,524.9 924.19,530.9 924.28,529.6 924.36,525.6 924.44,530.3 924.52,565.5 924.60,534.3 924.68,521.8 924.76,546.6 924.84,533.1 924.92,539.3 925.00,531.8 925.08,554.2 925.16,531.8 925.24,541.2 925.32,533.6 925.40,521.5 925.48,529.9 925.56,544.5 925.64,525.5 925.72,519.3 925.80,541.5 925.88,518.9 925.96,518.3 926.04,524.7 926.12,534.1 926.20,510.9 926.28,520.6 926.36,523.5 926.44,534.0 926.52,534.4 926.60,533.6 926.67,522.8 926.75,520.4 926.83,512.6 926.91,521.2 926.99,532.0 927.07,543.4 927.15,541.1 927.23,529.6 927.31,530.4 927.39,517.2 927.46,543.1 927.54,570.0 927.62,526.5 927.70,551.9 927.78,520.8 927.86,534.0 927.94,541.5 928.01,538.8 928.09,544.2 928.17,529.4 928.25,539.5 928.33,537.9 928.40,531.3 928.48,515.3 928.56,559.6 928.64,528.3 928.72,528.8 928.79,523.8 928.87,536.4 928.95,533.4 929.03,537.9 929.11,524.6 929.18,531.6 929.26,542.2 929.34,538.7 929.42,514.8 929.49,522.5 929.57,533.0 929.65,530.3 929.72,528.7 929.80,561.1 929.88,520.3 929.96,543.7 930.03,548.6 930.11,520.7 930.19,514.4 930.26,547.1 930.34,520.3 930.42,530.4 930.49,545.9 930.57,526.8 930.65,524.9 930.72,524.9 930.80,529.4 930.88,519.8 930.95,554.1 931.03,535.9 931.11,533.1 931.18,532.1 931.26,542.4 931.34,535.3 931.41,528.4 931.49,531.1 931.56,527.3 931.64,540.3 931.72,532.5 931.79,526.9 931.87,532.5 931.94,526.1 932.02,533.6 932.09,520.0 932.17,525.6 932.25,513.5 932.32,534.9 932.40,530.5 932.47,520.3 932.55,526.6 932.62,529.7 932.70,549.1 932.77,518.5 932.85,518.5 932.92,528.4 933.00,536.7" fill="none" stroke="#ff0000" stroke-width="0.8" stroke-linejoin="miter"/><circle cx="46.5" cy="534.7" r="1.6" fill="none" stroke="#ffff00" stroke-width="1"/><circle cx="933" cy="536.7" r="1.3" fill="#00ff00"/></svg>
<div style="left:934px;top:92px;width:1px;height:494px;background:#d8d8d8"></div>
<div style="left:941px;top:100px;width:1px;height:481px;background:#505050"></div>
<div style="left:937px;top:102px;width:2px;height:1px;background:#505050"></div>
<div style="left:945px;top:102px;width:1px;height:1px;background:#505050"></div>
<div style="left:937px;top:149px;width:2px;height:1px;background:#505050"></div>
<div style="left:945px;top:149px;width:1px;height:1px;background:#505050"></div>
<div style="left:937px;top:197px;width:2px;height:1px;background:#505050"></div>
<div style="left:945px;top:197px;width:1px;height:1px;background:#505050"></div>
<div style="left:937px;top:244px;width:2px;height:1px;background:#505050"></div>
<div style="left:945px;top:244px;width:1px;height:1px;background:#505050"></div>
<div style="left:937px;top:292px;width:2px;height:1px;background:#505050"></div>
<div style="left:945px;top:292px;width:1px;height:1px;background:#505050"></div>
<div style="left:937px;top:339px;width:2px;height:1px;background:#505050"></div>
<div style="left:945px;top:339px;width:1px;height:1px;background:#505050"></div>
<div style="left:937px;top:387px;width:2px;height:1px;background:#505050"></div>
<div style="left:945px;top:387px;width:1px;height:1px;background:#505050"></div>
<div style="left:937px;top:434px;width:2px;height:1px;background:#505050"></div>
<div style="left:945px;top:434px;width:1px;height:1px;background:#505050"></div>
<div style="left:937px;top:482px;width:2px;height:1px;background:#505050"></div>
<div style="left:945px;top:482px;width:1px;height:1px;background:#505050"></div>
<div style="left:937px;top:529px;width:2px;height:1px;background:#505050"></div>
<div style="left:945px;top:529px;width:1px;height:1px;background:#505050"></div>
<div style="left:937px;top:577px;width:2px;height:1px;background:#505050"></div>
<div style="left:945px;top:577px;width:1px;height:1px;background:#505050"></div>
<svg style="left:937px;top:165px" width="12" height="9" viewBox="0 0 12 9"><path d="M1.5 3 H9 Q10.5 3 10.5 4.5 Q10.5 6 9 6 H1.5" fill="#ffffff" stroke="#404040" stroke-width="1"/></svg>
<div style="left:0px;top:572px;width:934px;height:2px;background:#404040"></div>
<div style="left:0px;top:574px;width:935px;height:13px;background:#f4f4f4;border-right:1px solid #707070;border-bottom:1px solid #707070;box-sizing:border-box"></div>
<span style="left:3px;top:576.72px;font-size:8px;line-height:8px;font-weight:700;color:#101010;letter-spacing:-0.1px;">frequency</span>
<span style="left:46px;top:576.75px;font-size:8.2px;line-height:8.2px;font-weight:400;color:#101010;-webkit-text-stroke:0.15px #101010;">0.244</span>
<span style="left:223.5px;top:576.75px;font-size:8.2px;line-height:8.2px;font-weight:400;color:#101010;-webkit-text-stroke:0.15px #101010;">0.977</span>
<span style="left:401px;top:576.75px;font-size:8.2px;line-height:8.2px;font-weight:400;color:#101010;-webkit-text-stroke:0.15px #101010;">4.639</span>
<span style="left:578px;top:576.75px;font-size:8.2px;line-height:8.2px;font-weight:400;color:#101010;-webkit-text-stroke:0.15px #101010;">20.264</span>
<span style="left:756px;top:576.75px;font-size:8.2px;line-height:8.2px;font-weight:400;color:#101010;-webkit-text-stroke:0.15px #101010;">88.867</span>
<div style="left:5px;top:591px;width:83px;height:11px;background:#404040"></div>
<span style="left:-253.5px;width:600px;text-align:center;top:592.95px;font-size:8.2px;line-height:8.2px;font-weight:700;color:#f0f000;">C1  0.244</span>
<div style="left:92px;top:591px;width:83px;height:11px;background:#404040"></div>
<span style="left:-166.5px;width:600px;text-align:center;top:592.95px;font-size:8.2px;line-height:8.2px;font-weight:700;color:#00e000;">C2  390.625</span>
<div style="left:179px;top:591px;width:83px;height:11px;background:#404040"></div>
<span style="left:-79.5px;width:600px;text-align:center;top:592.95px;font-size:8.2px;line-height:8.2px;font-weight:700;color:#f0f0f0;">C1-C2  390.381</span>
<div style="left:266px;top:590px;width:21px;height:13px;background:#f0f0f0;border-left:1px solid #ffffff;border-top:1px solid #ffffff;border-right:1px solid #a0a0a0;border-bottom:1px solid #a0a0a0;box-sizing:border-box"></div>
<svg style="left:268px;top:591px" width="17" height="11" viewBox="0 0 17 11"><rect x="2.5" y="1.5" width="12" height="8" fill="#f8f8f8" stroke="#303030"/><line x1="3" y1="4" x2="14" y2="4" stroke="#303030"/><path d="M5.5 4 V9 M8.5 4 V9 M11.5 4 V9 M3 6.5 H14" stroke="#606060" stroke-width="0.8"/></svg>
<div style="left:895px;top:591px;width:52px;height:11px;background:#404040"></div>
<span style="left:621.0px;width:600px;text-align:center;top:592.95px;font-size:8.2px;line-height:8.2px;font-weight:700;color:#f0f0f0;">390.381</span>
<div style="left:0px;top:604px;width:950px;height:1px;background:#ffffff"></div>
<div style="left:0px;top:607px;width:950px;height:1px;background:#a8a8a8"></div>
<div style="left:0px;top:608px;width:950px;height:1px;background:#ffffff"></div>
<div style="left:4px;top:611px;width:1px;height:97px;background:#a0a0a0"></div>
<div style="left:5px;top:611px;width:1px;height:97px;background:#ffffff"></div>
<div style="left:7px;top:611px;width:1px;height:97px;background:#a0a0a0"></div>
<div style="left:8px;top:611px;width:1px;height:97px;background:#ffffff"></div>
<div style="left:16px;top:614px;width:929px;height:93px;background:#c0c0c0;border-top:1px solid #6a6a6a;border-left:1px solid #6a6a6a;border-right:1px solid #ffffff;border-bottom:1px solid #ffffff;box-sizing:border-box"></div>
<div style="left:17px;top:615px;width:927px;height:14px;background:#f0f0f0"></div>
<div style="left:17px;top:628px;width:927px;height:1px;background:#6a6a6a"></div>
<div style="left:68px;top:615px;width:1px;height:13px;background:#808080"></div>
<div style="left:69px;top:615px;width:1px;height:13px;background:#ffffff"></div>
<span style="left:22px;top:617.98px;font-size:8.4px;line-height:8.4px;font-weight:400;color:#101010;letter-spacing:-0.05px;-webkit-text-stroke:0.2px #101010;">Channel</span>
<div style="left:142px;top:615px;width:1px;height:13px;background:#808080"></div>
<div style="left:143px;top:615px;width:1px;height:13px;background:#ffffff"></div>
<span style="left:74px;top:617.98px;font-size:8.4px;line-height:8.4px;font-weight:400;color:#101010;letter-spacing:-0.05px;-webkit-text-stroke:0.2px #101010;">Range</span>
<div style="left:216px;top:615px;width:1px;height:13px;background:#808080"></div>
<div style="left:217px;top:615px;width:1px;height:13px;background:#ffffff"></div>
<span style="left:147.8px;top:617.98px;font-size:8.4px;line-height:8.4px;font-weight:400;color:#101010;letter-spacing:-0.05px;-webkit-text-stroke:0.2px #101010;">Display Max</span>
<div style="left:291px;top:615px;width:1px;height:13px;background:#808080"></div>
<div style="left:292px;top:615px;width:1px;height:13px;background:#ffffff"></div>
<span style="left:222.2px;top:617.98px;font-size:8.4px;line-height:8.4px;font-weight:400;color:#101010;letter-spacing:-0.05px;-webkit-text-stroke:0.2px #101010;">Display Min</span>
<div style="left:365px;top:615px;width:1px;height:13px;background:#808080"></div>
<div style="left:366px;top:615px;width:1px;height:13px;background:#ffffff"></div>
<span style="left:296.5px;top:617.98px;font-size:8.4px;line-height:8.4px;font-weight:400;color:#101010;letter-spacing:-0.05px;-webkit-text-stroke:0.2px #101010;">Cursor (C1)</span>
<div style="left:439px;top:615px;width:1px;height:13px;background:#808080"></div>
<div style="left:440px;top:615px;width:1px;height:13px;background:#ffffff"></div>
<span style="left:370.6px;top:617.98px;font-size:8.4px;line-height:8.4px;font-weight:400;color:#101010;letter-spacing:-0.05px;-webkit-text-stroke:0.2px #101010;">Cursor (C2)</span>
<div style="left:513px;top:615px;width:1px;height:13px;background:#808080"></div>
<div style="left:514px;top:615px;width:1px;height:13px;background:#ffffff"></div>
<span style="left:445.2px;top:617.98px;font-size:8.4px;line-height:8.4px;font-weight:400;color:#101010;letter-spacing:-0.05px;-webkit-text-stroke:0.2px #101010;">Abs (C1-C2)</span>
<div style="left:587px;top:615px;width:1px;height:13px;background:#808080"></div>
<div style="left:588px;top:615px;width:1px;height:13px;background:#ffffff"></div>
<span style="left:519.2px;top:617.98px;font-size:8.4px;line-height:8.4px;font-weight:400;color:#101010;letter-spacing:-0.05px;-webkit-text-stroke:0.2px #101010;">Max (C1-C2)</span>
<div style="left:662px;top:615px;width:1px;height:13px;background:#808080"></div>
<div style="left:663px;top:615px;width:1px;height:13px;background:#ffffff"></div>
<span style="left:593.5px;top:617.98px;font-size:8.4px;line-height:8.4px;font-weight:400;color:#101010;letter-spacing:-0.05px;-webkit-text-stroke:0.2px #101010;">Min (C1-C2)</span>
<div style="left:751px;top:615px;width:1px;height:13px;background:#808080"></div>
<div style="left:752px;top:615px;width:1px;height:13px;background:#ffffff"></div>
<span style="left:667.6px;top:617.98px;font-size:8.4px;line-height:8.4px;font-weight:400;color:#101010;letter-spacing:-0.05px;-webkit-text-stroke:0.2px #101010;">Channel Name</span>
<div style="left:943px;top:615px;width:1px;height:13px;background:#808080"></div>
<div style="left:944px;top:615px;width:1px;height:13px;background:#ffffff"></div>
<div style="left:17px;top:629px;width:734.5px;height:50.5px;background:#000040"></div>
<div style="left:68px;top:630px;width:1px;height:12px;background:#505060"></div>
<div style="left:142px;top:630px;width:1px;height:12px;background:#505060"></div>
<div style="left:216px;top:630px;width:1px;height:12px;background:#505060"></div>
<div style="left:291px;top:630px;width:1px;height:12px;background:#505060"></div>
<div style="left:365px;top:630px;width:1px;height:12px;background:#505060"></div>
<div style="left:439px;top:630px;width:1px;height:12px;background:#505060"></div>
<div style="left:513px;top:630px;width:1px;height:12px;background:#505060"></div>
<div style="left:587px;top:630px;width:1px;height:12px;background:#505060"></div>
<div style="left:662px;top:630px;width:1px;height:12px;background:#505060"></div>
<div style="left:18px;top:631px;width:12px;height:11px;background:#e0e0e0;border-right:1px solid #808080;border-bottom:1px solid #808080;box-sizing:border-box"></div>
<svg style="left:19px;top:632px" width="10" height="9" viewBox="0 0 10 9"><circle cx="5" cy="4.5" r="3.3" fill="#f4f4f4" stroke="#707070" stroke-width="0.8"/><path d="M3.6 4.5 H6.4 M5 3.1 V5.9" stroke="#101010" stroke-width="1"/></svg>
<span style="left:32.5px;top:630.68px;font-size:8.4px;line-height:8.4px;font-weight:400;color:#ffff00;-webkit-text-stroke:0.25px #ffff00;">1 ch</span>
<span style="left:73.5px;top:630.68px;font-size:8.4px;line-height:8.4px;font-weight:400;color:#ffff00;-webkit-text-stroke:0.25px #ffff00;">4.0000e+000(V)2</span>
<span style="left:147.3px;top:630.68px;font-size:8.4px;line-height:8.4px;font-weight:400;color:#ffff00;-webkit-text-stroke:0.25px #ffff00;">4.5569e-003(V)2</span>
<span style="left:221.7px;top:630.68px;font-size:8.4px;line-height:8.4px;font-weight:400;color:#ffff00;-webkit-text-stroke:0.25px #ffff00;">1.3662e-010(V)2</span>
<span style="left:296.0px;top:630.68px;font-size:8.4px;line-height:8.4px;font-weight:400;color:#ffff00;-webkit-text-stroke:0.25px #ffff00;">5.4305e-006(V)2</span>
<span style="left:370.1px;top:630.68px;font-size:8.4px;line-height:8.4px;font-weight:400;color:#ffff00;-webkit-text-stroke:0.25px #ffff00;">1.3299e-007(V)2</span>
<span style="left:444.7px;top:630.68px;font-size:8.4px;line-height:8.4px;font-weight:400;color:#ffff00;-webkit-text-stroke:0.25px #ffff00;">5.2975e-006(V)2</span>
<span style="left:518.7px;top:630.68px;font-size:8.4px;line-height:8.4px;font-weight:400;color:#ffff00;-webkit-text-stroke:0.25px #ffff00;">4.5569e-003(V)2</span>
<span style="left:593.0px;top:630.68px;font-size:8.4px;line-height:8.4px;font-weight:400;color:#ffff00;-webkit-text-stroke:0.25px #ffff00;">1.3662e-010(V)2</span>
<span style="left:667.1px;top:630.68px;font-size:8.4px;line-height:8.4px;font-weight:400;color:#ffff00;-webkit-text-stroke:0.25px #ffff00;">CH_1</span>
<div style="left:17px;top:641px;width:734.5px;height:1px;background:#505060"></div>
<div style="left:68px;top:642px;width:1px;height:12px;background:#505060"></div>
<div style="left:142px;top:642px;width:1px;height:12px;background:#505060"></div>
<div style="left:216px;top:642px;width:1px;height:12px;background:#505060"></div>
<div style="left:291px;top:642px;width:1px;height:12px;background:#505060"></div>
<div style="left:365px;top:642px;width:1px;height:12px;background:#505060"></div>
<div style="left:439px;top:642px;width:1px;height:12px;background:#505060"></div>
<div style="left:513px;top:642px;width:1px;height:12px;background:#505060"></div>
<div style="left:587px;top:642px;width:1px;height:12px;background:#505060"></div>
<div style="left:662px;top:642px;width:1px;height:12px;background:#505060"></div>
<div style="left:18px;top:643px;width:12px;height:11px;background:#e0e0e0;border-right:1px solid #808080;border-bottom:1px solid #808080;box-sizing:border-box"></div>
<svg style="left:19px;top:644px" width="10" height="9" viewBox="0 0 10 9"><circle cx="5" cy="4.5" r="3.3" fill="#f4f4f4" stroke="#707070" stroke-width="0.8"/><path d="M3.6 4.5 H6.4 M5 3.1 V5.9" stroke="#101010" stroke-width="1"/></svg>
<span style="left:32.5px;top:643.28px;font-size:8.4px;line-height:8.4px;font-weight:400;color:#00ff00;-webkit-text-stroke:0.25px #00ff00;">2 ch</span>
<span style="left:73.5px;top:643.28px;font-size:8.4px;line-height:8.4px;font-weight:400;color:#00ff00;-webkit-text-stroke:0.25px #00ff00;">4.0000e+000(V)2</span>
<span style="left:147.3px;top:643.28px;font-size:8.4px;line-height:8.4px;font-weight:400;color:#00ff00;-webkit-text-stroke:0.25px #00ff00;">4.3506e-003(V)2</span>
<span style="left:221.7px;top:643.28px;font-size:8.4px;line-height:8.4px;font-weight:400;color:#00ff00;-webkit-text-stroke:0.25px #00ff00;">3.7892e-010(V)2</span>
<span style="left:296.0px;top:643.28px;font-size:8.4px;line-height:8.4px;font-weight:400;color:#00ff00;-webkit-text-stroke:0.25px #00ff00;">7.3205e-007(V)2</span>
<span style="left:370.1px;top:643.28px;font-size:8.4px;line-height:8.4px;font-weight:400;color:#00ff00;-webkit-text-stroke:0.25px #00ff00;">4.0124e-008(V)2</span>
<span style="left:444.7px;top:643.28px;font-size:8.4px;line-height:8.4px;font-weight:400;color:#00ff00;-webkit-text-stroke:0.25px #00ff00;">6.9192e-007(V)2</span>
<span style="left:518.7px;top:643.28px;font-size:8.4px;line-height:8.4px;font-weight:400;color:#00ff00;-webkit-text-stroke:0.25px #00ff00;">4.3506e-003(V)2</span>
<span style="left:593.0px;top:643.28px;font-size:8.4px;line-height:8.4px;font-weight:400;color:#00ff00;-webkit-text-stroke:0.25px #00ff00;">3.7892e-010(V)2</span>
<span style="left:667.1px;top:643.28px;font-size:8.4px;line-height:8.4px;font-weight:400;color:#00ff00;-webkit-text-stroke:0.25px #00ff00;">CH_2</span>
<div style="left:17px;top:654px;width:734.5px;height:1px;background:#505060"></div>
<div style="left:68px;top:655px;width:1px;height:12px;background:#505060"></div>
<div style="left:142px;top:655px;width:1px;height:12px;background:#505060"></div>
<div style="left:216px;top:655px;width:1px;height:12px;background:#505060"></div>
<div style="left:291px;top:655px;width:1px;height:12px;background:#505060"></div>
<div style="left:365px;top:655px;width:1px;height:12px;background:#505060"></div>
<div style="left:439px;top:655px;width:1px;height:12px;background:#505060"></div>
<div style="left:513px;top:655px;width:1px;height:12px;background:#505060"></div>
<div style="left:587px;top:655px;width:1px;height:12px;background:#505060"></div>
<div style="left:662px;top:655px;width:1px;height:12px;background:#505060"></div>
<div style="left:18px;top:656px;width:12px;height:11px;background:#e0e0e0;border-right:1px solid #808080;border-bottom:1px solid #808080;box-sizing:border-box"></div>
<svg style="left:19px;top:657px" width="10" height="9" viewBox="0 0 10 9"><circle cx="5" cy="4.5" r="3.3" fill="#f4f4f4" stroke="#707070" stroke-width="0.8"/><path d="M3.6 4.5 H6.4 M5 3.1 V5.9" stroke="#101010" stroke-width="1"/></svg>
<span style="left:32.5px;top:655.88px;font-size:8.4px;line-height:8.4px;font-weight:400;color:#00ffff;-webkit-text-stroke:0.25px #00ffff;">3 ch</span>
<span style="left:73.5px;top:655.88px;font-size:8.4px;line-height:8.4px;font-weight:400;color:#00ffff;-webkit-text-stroke:0.25px #00ffff;">4.0000e+000(V)2</span>
<span style="left:147.3px;top:655.88px;font-size:8.4px;line-height:8.4px;font-weight:400;color:#00ffff;-webkit-text-stroke:0.25px #00ffff;">2.9110e-003(V)2</span>
<span style="left:221.7px;top:655.88px;font-size:8.4px;line-height:8.4px;font-weight:400;color:#00ffff;-webkit-text-stroke:0.25px #00ffff;">1.1207e-009(V)2</span>
<span style="left:296.0px;top:655.88px;font-size:8.4px;line-height:8.4px;font-weight:400;color:#00ffff;-webkit-text-stroke:0.25px #00ffff;">1.0420e-005(V)2</span>
<span style="left:370.1px;top:655.88px;font-size:8.4px;line-height:8.4px;font-weight:400;color:#00ffff;-webkit-text-stroke:0.25px #00ffff;">4.7180e-006(V)2</span>
<span style="left:444.7px;top:655.88px;font-size:8.4px;line-height:8.4px;font-weight:400;color:#00ffff;-webkit-text-stroke:0.25px #00ffff;">5.7024e-006(V)2</span>
<span style="left:518.7px;top:655.88px;font-size:8.4px;line-height:8.4px;font-weight:400;color:#00ffff;-webkit-text-stroke:0.25px #00ffff;">2.1382e-004(V)2</span>
<span style="left:593.0px;top:655.88px;font-size:8.4px;line-height:8.4px;font-weight:400;color:#00ffff;-webkit-text-stroke:0.25px #00ffff;">1.1207e-009(V)2</span>
<span style="left:667.1px;top:655.88px;font-size:8.4px;line-height:8.4px;font-weight:400;color:#00ffff;-webkit-text-stroke:0.25px #00ffff;">CH_3</span>
<div style="left:17px;top:666px;width:734.5px;height:1px;background:#505060"></div>
<div style="left:68px;top:667px;width:1px;height:12px;background:#505060"></div>
<div style="left:142px;top:667px;width:1px;height:12px;background:#505060"></div>
<div style="left:216px;top:667px;width:1px;height:12px;background:#505060"></div>
<div style="left:291px;top:667px;width:1px;height:12px;background:#505060"></div>
<div style="left:365px;top:667px;width:1px;height:12px;background:#505060"></div>
<div style="left:439px;top:667px;width:1px;height:12px;background:#505060"></div>
<div style="left:513px;top:667px;width:1px;height:12px;background:#505060"></div>
<div style="left:587px;top:667px;width:1px;height:12px;background:#505060"></div>
<div style="left:662px;top:667px;width:1px;height:12px;background:#505060"></div>
<div style="left:18px;top:668px;width:12px;height:11px;background:#e0e0e0;border-right:1px solid #808080;border-bottom:1px solid #808080;box-sizing:border-box"></div>
<svg style="left:19px;top:669px" width="10" height="9" viewBox="0 0 10 9"><circle cx="5" cy="4.5" r="3.3" fill="#f4f4f4" stroke="#707070" stroke-width="0.8"/><path d="M3.6 4.5 H6.4 M5 3.1 V5.9" stroke="#101010" stroke-width="1"/></svg>
<span style="left:32.5px;top:668.48px;font-size:8.4px;line-height:8.4px;font-weight:400;color:#ff0000;-webkit-text-stroke:0.25px #ff0000;">4 ch</span>
<span style="left:73.5px;top:668.48px;font-size:8.4px;line-height:8.4px;font-weight:400;color:#ff0000;-webkit-text-stroke:0.25px #ff0000;">4.0000e+000(V)2</span>
<span style="left:147.3px;top:668.48px;font-size:8.4px;line-height:8.4px;font-weight:400;color:#ff0000;-webkit-text-stroke:0.25px #ff0000;">4.2380e-003(V)2</span>
<span style="left:221.7px;top:668.48px;font-size:8.4px;line-height:8.4px;font-weight:400;color:#ff0000;-webkit-text-stroke:0.25px #ff0000;">2.6291e-008(V)2</span>
<span style="left:296.0px;top:668.48px;font-size:8.4px;line-height:8.4px;font-weight:400;color:#ff0000;-webkit-text-stroke:0.25px #ff0000;">1.8785e-006(V)2</span>
<span style="left:370.1px;top:668.48px;font-size:8.4px;line-height:8.4px;font-weight:400;color:#ff0000;-webkit-text-stroke:0.25px #ff0000;">9.4329e-006(V)2</span>
<span style="left:444.7px;top:668.48px;font-size:8.4px;line-height:8.4px;font-weight:400;color:#ff0000;-webkit-text-stroke:0.25px #ff0000;">7.5544e-006(V)2</span>
<span style="left:518.7px;top:668.48px;font-size:8.4px;line-height:8.4px;font-weight:400;color:#ff0000;-webkit-text-stroke:0.25px #ff0000;">4.2380e-003(V)2</span>
<span style="left:593.0px;top:668.48px;font-size:8.4px;line-height:8.4px;font-weight:400;color:#ff0000;-webkit-text-stroke:0.25px #ff0000;">2.6291e-008(V)2</span>
<span style="left:667.1px;top:668.48px;font-size:8.4px;line-height:8.4px;font-weight:400;color:#ff0000;-webkit-text-stroke:0.25px #ff0000;">CH_4</span>
<div style="left:0px;top:713px;width:950px;height:1px;background:#a8a8a8"></div>
<div style="left:0px;top:714px;width:950px;height:1px;background:#ffffff"></div>
<span style="left:2.5px;top:719.36px;font-size:8.3px;line-height:8.3px;font-weight:400;color:#202020;">Ready</span>
<div style="left:243px;top:717px;width:707px;height:13px;border-left:1px solid #a0a0a0;border-top:1px solid #a0a0a0;box-sizing:border-box"></div>
<span style="left:245px;top:719.66px;font-size:8.3px;line-height:8.3px;font-weight:400;color:#202020;letter-spacing:0.05px;">C:&#165;work&#165;Data&#165;SampDat&#165;Sample</span>
</body></html>
